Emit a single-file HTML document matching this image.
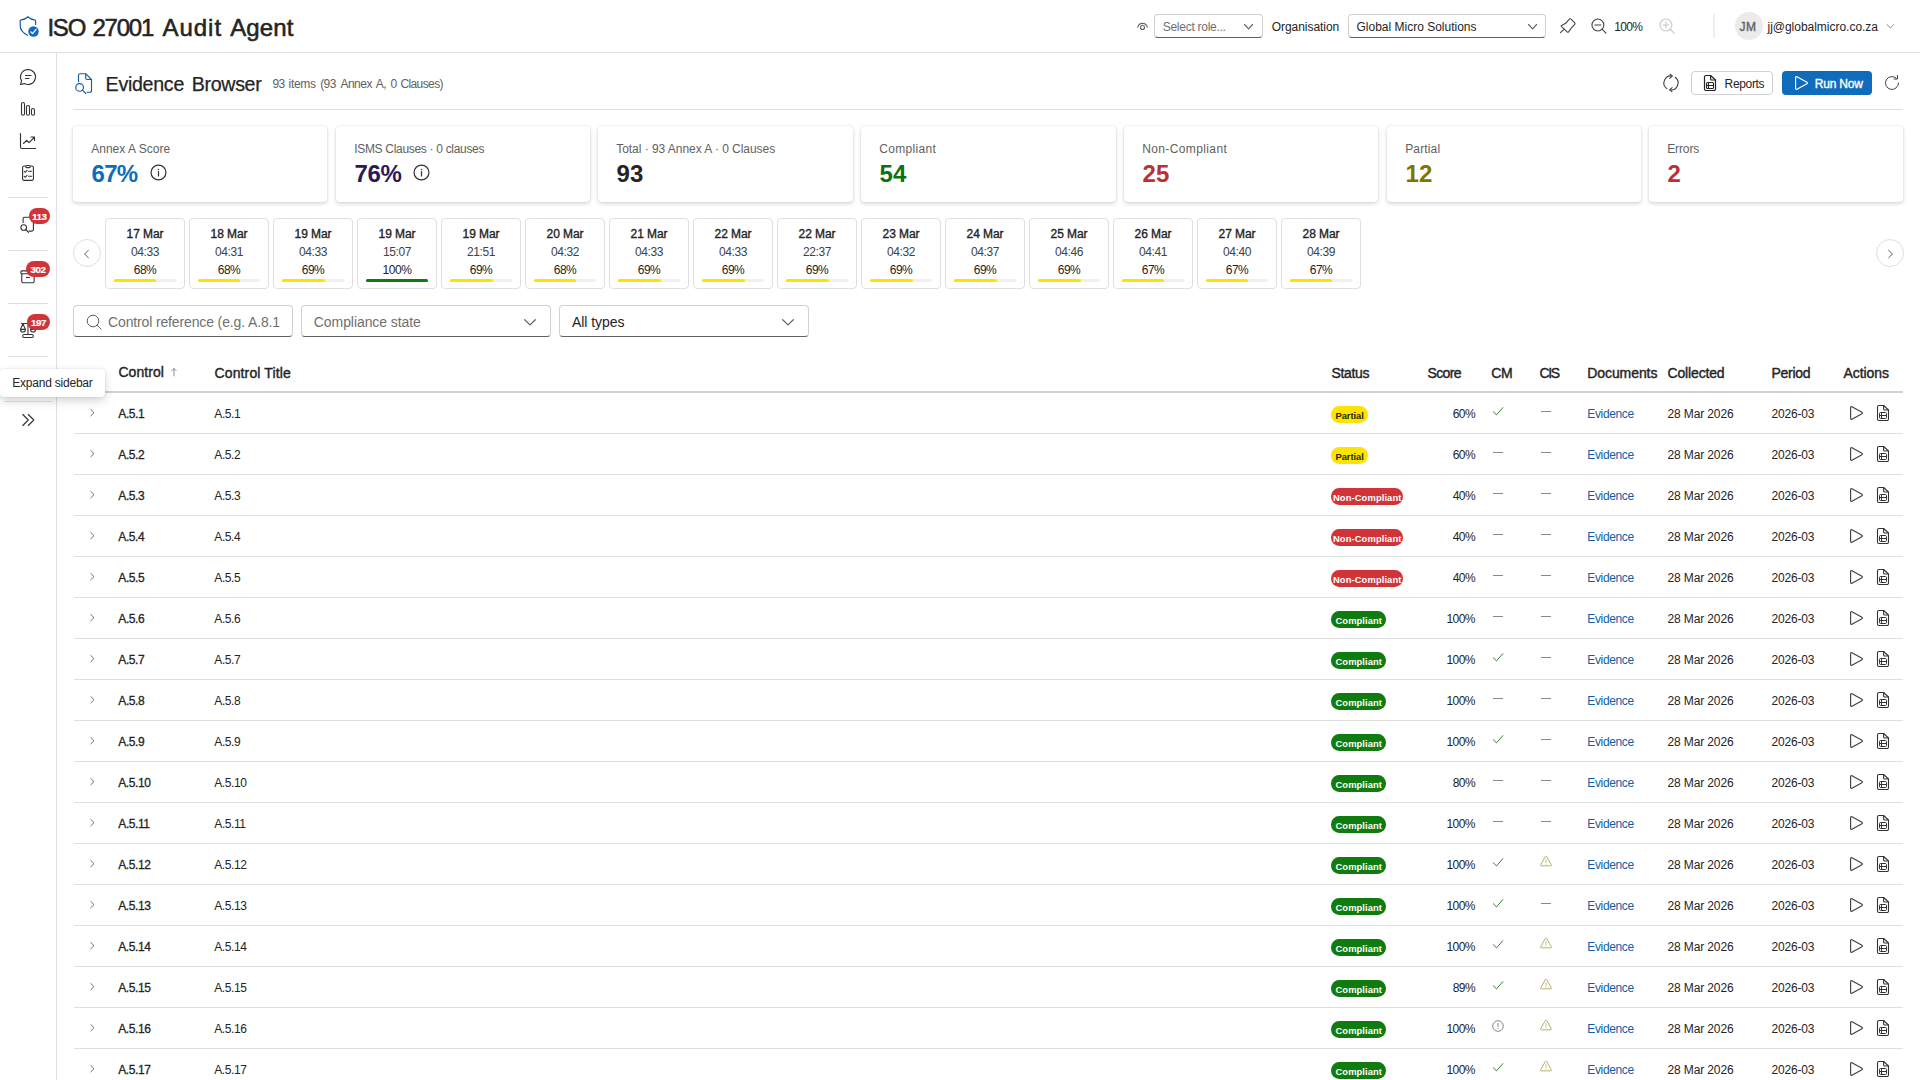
<!DOCTYPE html>
<html lang="en"><head><meta charset="utf-8"><title>ISO 27001 Audit Agent - Evidence Browser</title>
<style>
html,body{margin:0;padding:0}
body{width:1920px;height:1080px;overflow:hidden;background:#fff;position:relative;font-family:"Liberation Sans", sans-serif;color:#242424}
.t{position:absolute;white-space:pre;font-family:"Liberation Sans", sans-serif}
.i{position:absolute;overflow:visible}
#hdr{position:absolute;left:0;top:0;width:1920px;height:52px;border-bottom:1px solid #e0e0e0;box-sizing:content-box;background:#fff}
#side{position:absolute;left:0;top:53px;width:56px;height:1027px;border-right:1px solid #e0e0e0;background:#fff}
.sel{position:absolute;box-sizing:border-box;border:1px solid #d1d1d1;border-bottom-color:#616161;border-radius:4px;background:#fff}
.card{position:absolute;border-radius:4px;background:#fff;box-shadow:0 0 2px rgba(0,0,0,.12),0 2px 4px rgba(0,0,0,.14)}
.tc{position:absolute;top:218px;width:80px;height:71px;box-sizing:border-box;border:1px solid #e0e0e0;border-radius:4px;background:#fff}
.rb{position:absolute;width:28px;height:28px;box-sizing:border-box;border:1px solid #e0e0e0;border-radius:50%;background:#fff}
.bdg{position:absolute;height:16px;border-radius:8px;background:#d13438;color:#fff;font-size:9.8px;line-height:17.2px;text-align:center;font-weight:700;letter-spacing:-.45px;overflow:hidden;-webkit-text-stroke:.2px #fff}
.pill{position:absolute;height:16.4px;border-radius:8.2px}
#tip{position:absolute;left:0;top:369px;width:104.5px;height:27.7px;border-radius:4px;background:#fff;box-shadow:0 0 2px rgba(0,0,0,.14),0 4px 10px rgba(0,0,0,.17);z-index:5}
</style></head>
<body>
<div id="hdr"></div>
<svg class="i" style="left:18px;top:15px;" width="24" height="24" viewBox="0 0 24 24" fill="none"><path d="M9.900 2C8 3.600 5.800 4.600 3.200 4.800a1 1 0 0 0-1 1V10.500c0 4.500 2.800 7.500 7.400 9.700" stroke="#115ea3" stroke-width="1.200" stroke-linecap="round" stroke-linejoin="round"/><path d="M9.900 2c1.900 1.600 4.100 2.600 6.700 2.800a1 1 0 0 1 1 1V9.500" stroke="#115ea3" stroke-width="1.200" stroke-linecap="round" stroke-linejoin="round"/><circle cx="15.500" cy="16.500" r="5.250" fill="#0f6cbd"/><path d="M12.900 16.950l1.650 1.650 3.550-4.300" stroke="#fff" stroke-width="1.300" stroke-linecap="round" stroke-linejoin="round"/></svg>
<div class="t" style="left:47.4px;top:12px;font-size:24px;line-height:32px;font-weight:400;color:#242424;letter-spacing:-1.2px;-webkit-text-stroke:0.55px #242424;">ISO</div><div class="t" style="left:92.4px;top:12px;font-size:24px;line-height:32px;font-weight:400;color:#242424;letter-spacing:-1.2px;-webkit-text-stroke:0.55px #242424;">27001</div><div class="t" style="left:162.5px;top:12px;font-size:24px;line-height:32px;font-weight:400;color:#242424;letter-spacing:0.966px;-webkit-text-stroke:0.55px #242424;">Audit</div><div class="t" style="left:230.2px;top:12px;font-size:24px;line-height:32px;font-weight:400;color:#242424;letter-spacing:0.137px;-webkit-text-stroke:0.55px #242424;">Agent</div>
<svg class="i" style="left:1136px;top:20px;" width="13" height="13" viewBox="0 0 13 13" fill="none"><path d="M1.700 7.200C2.400 4.700 4.200 3.300 6.500 3.300s4.100 1.400 4.800 3.900" stroke="#616161" stroke-width="1.150" stroke-linecap="round"/><circle cx="6.500" cy="7.500" r="2" stroke="#616161" stroke-width="1.150"/></svg>
<div class="sel" style="left:1154px;top:14px;width:109px;height:24px"></div>
<div class="t" style="left:1162.7px;top:19px;font-size:12px;line-height:17px;font-weight:400;color:#707070;letter-spacing:-0.265px;">Select role...</div>
<svg class="i" style="left:1242px;top:21px;" width="12" height="12" viewBox="0 0 12 12" fill="none"><path d="M2.500 3.500L6.550 7.800 10.600 3.500" stroke="#616161" stroke-width="1.100" stroke-linecap="round" stroke-linejoin="round"/></svg>
<div class="t" style="left:1271.7px;top:19px;font-size:12px;line-height:17px;font-weight:400;color:#242424;letter-spacing:-0.046px;">Organisation</div>
<div class="sel" style="left:1348px;top:14px;width:198px;height:24px"></div>
<div class="t" style="left:1356.5px;top:19px;font-size:12px;line-height:17px;font-weight:400;color:#242424;letter-spacing:-0.003px;">Global Micro Solutions</div>
<svg class="i" style="left:1526px;top:21px;" width="12" height="12" viewBox="0 0 12 12" fill="none"><path d="M2.500 3.500L6.550 7.800 10.600 3.500" stroke="#616161" stroke-width="1.100" stroke-linecap="round" stroke-linejoin="round"/></svg>
<svg class="i" style="left:1559px;top:17px;" width="18" height="18" viewBox="0 0 18 18" fill="none"><path d="M10.300 2.200Q11.100 1.300 12 2.100L15.600 5.700Q16.500 6.600 15.700 7.400L12.900 10.300 9.600 14.900Q8.900 15.600 8.200 14.900L2.400 9.600Q1.700 8.900 2.600 8.400L6.700 6.300z" stroke="#424242" stroke-width="1.100" stroke-linejoin="round"/><path d="M5.300 12.200L1.400 15.700" stroke="#424242" stroke-width="1.100" stroke-linecap="round"/></svg>
<svg class="i" style="left:1590px;top:16.9px;" width="18" height="18" viewBox="0 0 18 18" fill="none"><circle cx="7.900" cy="8" r="5.950" stroke="#424242" stroke-width="1.100"/><path d="M12.100 12.200l3.900 3.900M4.900 8h6.100" stroke="#424242" stroke-width="1.100" stroke-linecap="round"/></svg>
<div class="t" style="left:1614.2px;top:19px;font-size:12px;line-height:17px;font-weight:400;color:#242424;letter-spacing:-0.676px;">100%</div>
<svg class="i" style="left:1658px;top:16.9px;" width="18" height="18" viewBox="0 0 18 18" fill="none"><circle cx="7.950" cy="8" r="5.950" stroke="#c6c6c6" stroke-width="1.100"/><path d="M12.150 12.200l3.900 3.900M4.900 8h6.100M7.950 4.900v6.200" stroke="#c6c6c6" stroke-width="1.100" stroke-linecap="round"/></svg>
<div style="position:absolute;left:1713px;top:14px;width:2px;height:24px;background:#efefef"></div>
<div style="position:absolute;left:1734.5px;top:12px;width:28px;height:28px;border-radius:50%;background:#ebebeb"></div>
<div class="t" style="left:1739.5px;top:19px;font-size:12px;line-height:17px;font-weight:400;color:#616161;letter-spacing:0.5px;-webkit-text-stroke:0.35px #616161;">JM</div>
<div class="t" style="left:1767.5px;top:19px;font-size:12px;line-height:17px;font-weight:400;color:#242424;letter-spacing:-0.02px;">jj@globalmicro.co.za</div>
<svg class="i" style="left:1885px;top:21px;" width="11" height="11" viewBox="0 0 11 11" fill="none"><path d="M2 3.700L5.300 6.900l3.300-3.200" stroke="#8a8a8a" stroke-width="1" stroke-linecap="round" stroke-linejoin="round"/></svg>
<div id="side"></div>
<svg class="i" style="left:18px;top:67px;" width="20" height="20" viewBox="0 0 20 20" fill="none"><path d="M10 2.500a7.500 7.500 0 1 1-3.600 14.080L2.600 17.500l.960-3.700A7.500 7.500 0 0 1 10 2.500z" stroke="#333" stroke-width="1.150" stroke-linejoin="round"/><path d="M7.500 8.500h5.500M7.500 11.500h3.500" stroke="#333" stroke-width="1.150" stroke-linecap="round"/></svg>
<svg class="i" style="left:18px;top:99px;" width="20" height="20" viewBox="0 0 20 20" fill="none"><rect x="3.500" y="3.500" width="3" height="12.700" rx="1.500" stroke="#333" stroke-width="1.100"/><rect x="8.500" y="6.500" width="3" height="9.700" rx="1.500" stroke="#333" stroke-width="1.100"/><rect x="13.500" y="9.500" width="3" height="6.700" rx="1.500" stroke="#333" stroke-width="1.100"/></svg>
<svg class="i" style="left:18px;top:131px;" width="20" height="20" viewBox="0 0 20 20" fill="none"><path d="M2.500 2.500v13.500a1.500 1.500 0 0 0 1.500 1.500h13.500" stroke="#333" stroke-width="1.150" stroke-linecap="round"/><path d="M5.500 12.500l3.200-3.200 2.300 2.300 5.500-5.500M13 6h3.500v3.500" stroke="#333" stroke-width="1.150" stroke-linecap="round" stroke-linejoin="round"/></svg>
<svg class="i" style="left:18px;top:163px;" width="20" height="20" viewBox="0 0 20 20" fill="none"><path d="M7.700 3.050H6.100a1.500 1.500 0 0 0-1.500 1.500V15.850a1.500 1.500 0 0 0 1.500 1.500h7.800a1.500 1.500 0 0 0 1.500-1.500V4.550a1.500 1.500 0 0 0-1.500-1.500H12.300" stroke="#333" stroke-width="1.100"/><rect x="7.700" y="2.450" width="4.600" height="2.200" rx="1.100" stroke="#333" stroke-width="1.100"/><path d="M6.200 8.400l1.100.9L9 7.300M6.200 13.400l1.100.9L9 12.300M10.600 8.300h3M10.600 13.300h3" stroke="#333" stroke-width="1.050" stroke-linecap="round" stroke-linejoin="round"/></svg>
<div style="position:absolute;left:8px;top:197px;width:40px;height:1px;background:#e0e0e0"></div>
<svg class="i" style="left:17px;top:215px;" width="20" height="20" viewBox="0 0 20 20" fill="none"><path d="M6.100 7.400V3.700a1.500 1.500 0 0 1 1.500-1.500H12.500l3.900 3.900V14.600a1.500 1.500 0 0 1-1.500 1.500H11.900" stroke="#333" stroke-width="1.100" stroke-linecap="round" stroke-linejoin="round"/><circle cx="6.700" cy="12.500" r="2.800" stroke="#333" stroke-width="1.100"/><path d="M8.700 14.500L11.500 17.300" stroke="#333" stroke-width="1.100" stroke-linecap="round"/></svg>
<div class="bdg" style="left:28.8px;top:208px;width:21px">113</div>
<div style="position:absolute;left:8px;top:250px;width:40px;height:1px;background:#e0e0e0"></div>
<svg class="i" style="left:18px;top:267px;" width="20" height="20" viewBox="0 0 20 20" fill="none"><rect x="2.850" y="3.900" width="14.200" height="2.800" rx="1" stroke="#333" stroke-width="1.100"/><path d="M3.750 6.700V14a1.800 1.800 0 0 0 1.800 1.800h8.800a1.800 1.800 0 0 0 1.800-1.800V6.700M8.400 10.500h3" stroke="#333" stroke-width="1.100" stroke-linecap="round"/></svg>
<div class="bdg" style="left:26px;top:261px;width:24px">302</div>
<div style="position:absolute;left:8px;top:303px;width:40px;height:1px;background:#e0e0e0"></div>
<svg class="i" style="left:18px;top:320px;" width="20" height="20" viewBox="0 0 20 20" fill="none"><path d="M3.500 3.500H16.500" stroke="#333" stroke-width="1.100" stroke-linecap="round"/><path d="M9.950 2.500V14.300" stroke="#555" stroke-width="1.300"/><path d="M2.600 9.300L4.950 3.800 7.300 9.300M12.700 9.300L15.050 3.800 17.400 9.300" stroke="#333" stroke-width="1.050" stroke-linejoin="round"/><path d="M2.500 9.400H7.400M2.500 9.400a2.450 2.600 0 0 0 4.900 0M12.600 9.400H17.500M12.600 9.400a2.450 2.600 0 0 0 4.900 0" stroke="#333" stroke-width="1.100" stroke-linecap="round"/><rect x="4.650" y="14.550" width="10.700" height="2.900" rx="1.450" stroke="#333" stroke-width="1.100"/></svg>
<div class="bdg" style="left:27px;top:314px;width:23px">197</div>
<div style="position:absolute;left:8px;top:356px;width:40px;height:1px;background:#e0e0e0"></div>
<div style="position:absolute;left:4px;top:401px;width:48px;height:1px;background:#e0e0e0"></div>
<svg class="i" style="left:20px;top:412px;" width="16" height="16" viewBox="0 0 16 16" fill="none"><path d="M2.800 2.500L8.300 8l-5.500 5.500M8.300 2.500L13.800 8l-5.500 5.500" stroke="#333" stroke-width="1.150" stroke-linecap="round" stroke-linejoin="round"/></svg>
<svg class="i" style="left:70px;top:68px;" width="28" height="28" viewBox="0 0 28 28" fill="none"><path d="M8.500 13.700V7.200a1.500 1.500 0 0 1 1.500-1.500H15.700L21.500 11.500V22.700a1.500 1.500 0 0 1-1.500 1.500H17" stroke="#115ea3" stroke-width="1.150" stroke-linecap="round" stroke-linejoin="round"/><path d="M15.700 5.700V10a1.500 1.500 0 0 0 1.500 1.500H21.500" stroke="#115ea3" stroke-width="1.150" stroke-linejoin="round"/><circle cx="9.600" cy="19.400" r="3.850" stroke="#115ea3" stroke-width="1.150"/><path d="M12.400 22.200L15.700 25.500" stroke="#115ea3" stroke-width="1.150" stroke-linecap="round"/></svg>
<div class="t" style="left:105.6px;top:70px;font-size:19.6px;line-height:28px;font-weight:400;color:#242424;letter-spacing:-0.272px;-webkit-text-stroke:0.25px #242424;">Evidence</div><div class="t" style="left:191.8px;top:70px;font-size:19.6px;line-height:28px;font-weight:400;color:#242424;letter-spacing:-0.322px;-webkit-text-stroke:0.25px #242424;">Browser</div>
<div class="t" style="left:272.4px;top:76px;font-size:12px;line-height:16px;font-weight:400;color:#616161;letter-spacing:-0.6px;">93</div><div class="t" style="left:288.6px;top:76px;font-size:12px;line-height:16px;font-weight:400;color:#616161;letter-spacing:-0.317px;">items</div><div class="t" style="left:320.2px;top:76px;font-size:12px;line-height:16px;font-weight:400;color:#616161;letter-spacing:-0.6px;">(93</div><div class="t" style="left:340.4px;top:76px;font-size:12px;line-height:16px;font-weight:400;color:#616161;letter-spacing:-0.506px;">Annex</div><div class="t" style="left:375.8px;top:76px;font-size:12px;line-height:16px;font-weight:400;color:#616161;letter-spacing:-0.6px;">A,</div><div class="t" style="left:390.5px;top:76px;font-size:12px;line-height:16px;font-weight:400;color:#616161;letter-spacing:0px;">0</div><div class="t" style="left:400.4px;top:76px;font-size:12px;line-height:16px;font-weight:400;color:#616161;letter-spacing:-0.6px;">Clauses)</div>
<div style="position:absolute;left:73px;top:109px;width:1830px;height:1px;background:#e0e0e0"></div>
<svg class="i" style="left:1661px;top:73px;" width="20" height="20" viewBox="0 0 20 20" fill="none"><path d="M11.200 3A7 7 0 0 0 5.900 15.600M14.200 4.300A7 7 0 0 1 8.700 16.800" stroke="#424242" stroke-width="1.100" stroke-linecap="round"/><path d="M9 1.100L11.200 3 8.800 5.300M11.100 14.700L8.700 16.800l2.200 1.800" stroke="#424242" stroke-width="1.100" stroke-linecap="round" stroke-linejoin="round"/></svg>
<div style="position:absolute;left:1691px;top:71px;width:82px;height:24px;box-sizing:border-box;border:1px solid #d1d1d1;border-radius:4px;background:#fff"></div>
<svg class="i" style="left:1700px;top:73px;" width="20" height="20" viewBox="0 0 20 20" fill="none"><path d="M10.600 2.500H6A1.500 1.500 0 0 0 4.500 4v12A1.500 1.500 0 0 0 6 17.500h8a1.500 1.500 0 0 0 1.500-1.500V7z" stroke="#242424" stroke-width="1.2" stroke-linejoin="round"/><path d="M10.600 2.500V6a1 1 0 0 0 1 1H15.500" stroke="#242424" stroke-width="1.2" stroke-linejoin="round"/><rect x="6.500" y="9.500" width="7" height="6" rx="1.100" stroke="#242424" stroke-width="1.1"/><path d="M6.500 12.500h7M8.500 9.500v6" stroke="#242424" stroke-width="1.1"/></svg>
<div class="t" style="left:1724.6px;top:76px;font-size:12px;line-height:16px;font-weight:400;color:#242424;letter-spacing:-0.347px;">Reports</div>
<div style="position:absolute;left:1782px;top:71px;width:90px;height:24px;border-radius:4px;background:#0f6cbd"></div>
<svg class="i" style="left:1791px;top:73px;" width="20" height="20" viewBox="0 0 20 20" fill="none"><path d="M4.600 4.500v11a.9.900 0 0 0 1.350.780l10-5.500a.9.900 0 0 0 0-1.560l-10-5.500A.9.900 0 0 0 4.600 4.500z" stroke="#fff" stroke-width="1.15" stroke-linejoin="round"/></svg>
<div class="t" style="left:1814.8px;top:76px;font-size:12px;line-height:16px;font-weight:400;color:#fff;letter-spacing:-0.194px;-webkit-text-stroke:0.35px #fff;">Run Now</div>
<svg class="i" style="left:1882px;top:73px;" width="20" height="20" viewBox="0 0 20 20" fill="none"><path d="M16.500 10a6.500 6.500 0 1 1-2.200-4.900" stroke="#424242" stroke-width="1" stroke-linecap="round"/><path d="M15.500 2.500v3.500H12" stroke="#424242" stroke-width="1" stroke-linecap="round" stroke-linejoin="round"/></svg>
<div class="card" style="left:73px;top:126px;width:254px;height:76px"></div>
<div class="t" style="left:91.2px;top:141px;font-size:12px;line-height:16px;font-weight:400;color:#616161;letter-spacing:0.02px;">Annex A Score</div>
<div class="t" style="left:91.5px;top:158px;font-size:24px;line-height:32px;font-weight:700;color:#0f6cbd;letter-spacing:-0.682px;">67%</div>
<svg class="i" style="left:150px;top:163.5px;" width="17" height="17" viewBox="0 0 17 17" fill="none"><circle cx="8.500" cy="8.500" r="7.450" stroke="#333" stroke-width="1.200"/><path d="M8.500 7.600v4.400" stroke="#333" stroke-width="1.200" stroke-linecap="round"/><circle cx="8.500" cy="5.400" r=".75" fill="#424242"/></svg>
<div class="card" style="left:336px;top:126px;width:254px;height:76px"></div>
<div class="t" style="left:354.2px;top:141px;font-size:12px;line-height:16px;font-weight:400;color:#616161;letter-spacing:-0.308px;">ISMS Clauses · 0 clauses</div>
<div class="t" style="left:354.5px;top:158px;font-size:24px;line-height:32px;font-weight:700;color:#2c1958;letter-spacing:-0.349px;">76%</div>
<svg class="i" style="left:413px;top:163.5px;" width="17" height="17" viewBox="0 0 17 17" fill="none"><circle cx="8.500" cy="8.500" r="7.450" stroke="#333" stroke-width="1.200"/><path d="M8.500 7.600v4.400" stroke="#333" stroke-width="1.200" stroke-linecap="round"/><circle cx="8.500" cy="5.400" r=".75" fill="#424242"/></svg>
<div class="card" style="left:598px;top:126px;width:255px;height:76px"></div>
<div class="t" style="left:616.2px;top:141px;font-size:12px;line-height:16px;font-weight:400;color:#616161;letter-spacing:-0.037px;">Total · 93 Annex A · 0 Clauses</div>
<div class="t" style="left:616.5px;top:158px;font-size:24px;line-height:32px;font-weight:700;color:#242424;letter-spacing:0.148px;">93</div>
<div class="card" style="left:861px;top:126px;width:255px;height:76px"></div>
<div class="t" style="left:879.2px;top:141px;font-size:12px;line-height:16px;font-weight:400;color:#616161;letter-spacing:0.33px;">Compliant</div>
<div class="t" style="left:879.5px;top:158px;font-size:24px;line-height:32px;font-weight:700;color:#0e700e;letter-spacing:0.148px;">54</div>
<div class="card" style="left:1124px;top:126px;width:254px;height:76px"></div>
<div class="t" style="left:1142.2px;top:141px;font-size:12px;line-height:16px;font-weight:400;color:#616161;letter-spacing:0.381px;">Non-Compliant</div>
<div class="t" style="left:1142.5px;top:158px;font-size:24px;line-height:32px;font-weight:700;color:#bc2f32;letter-spacing:0.148px;">25</div>
<div class="card" style="left:1387px;top:126px;width:254px;height:76px"></div>
<div class="t" style="left:1405.2px;top:141px;font-size:12px;line-height:16px;font-weight:400;color:#616161;letter-spacing:0.141px;">Partial</div>
<div class="t" style="left:1405.5px;top:158px;font-size:24px;line-height:32px;font-weight:700;color:#817400;letter-spacing:0.148px;">12</div>
<div class="card" style="left:1649px;top:126px;width:254px;height:76px"></div>
<div class="t" style="left:1667.2px;top:141px;font-size:12px;line-height:16px;font-weight:400;color:#616161;letter-spacing:-0.112px;">Errors</div>
<div class="t" style="left:1667.5px;top:158px;font-size:24px;line-height:32px;font-weight:700;color:#bc2f32;letter-spacing:-0.359px;">2</div>
<div class="tc" style="left:105px"></div>
<div class="t" style="left:126.6px;top:226px;font-size:12px;line-height:16px;font-weight:400;color:#242424;letter-spacing:-0.093px;-webkit-text-stroke:0.35px #242424;">17 Mar</div>
<div class="t" style="left:130.89px;top:244px;font-size:12px;line-height:16px;font-weight:400;color:#424242;letter-spacing:-0.36px;">04:33</div>
<div class="t" style="left:133.71px;top:262px;font-size:12px;line-height:16px;font-weight:400;color:#242424;letter-spacing:-0.481px;">68%</div>
<div style="position:absolute;left:114px;top:279px;width:62px;height:3px;border-radius:2px;background:#f0f0f0"><div style="width:68%;height:3px;border-radius:2px;background:#fde300"></div></div>
<div class="tc" style="left:189px"></div>
<div class="t" style="left:210.6px;top:226px;font-size:12px;line-height:16px;font-weight:400;color:#242424;letter-spacing:-0.093px;-webkit-text-stroke:0.35px #242424;">18 Mar</div>
<div class="t" style="left:214.89px;top:244px;font-size:12px;line-height:16px;font-weight:400;color:#424242;letter-spacing:-0.36px;">04:31</div>
<div class="t" style="left:217.71px;top:262px;font-size:12px;line-height:16px;font-weight:400;color:#242424;letter-spacing:-0.481px;">68%</div>
<div style="position:absolute;left:198px;top:279px;width:62px;height:3px;border-radius:2px;background:#f0f0f0"><div style="width:68%;height:3px;border-radius:2px;background:#fde300"></div></div>
<div class="tc" style="left:273px"></div>
<div class="t" style="left:294.6px;top:226px;font-size:12px;line-height:16px;font-weight:400;color:#242424;letter-spacing:-0.093px;-webkit-text-stroke:0.35px #242424;">19 Mar</div>
<div class="t" style="left:298.89px;top:244px;font-size:12px;line-height:16px;font-weight:400;color:#424242;letter-spacing:-0.36px;">04:33</div>
<div class="t" style="left:301.71px;top:262px;font-size:12px;line-height:16px;font-weight:400;color:#242424;letter-spacing:-0.481px;">69%</div>
<div style="position:absolute;left:282px;top:279px;width:62px;height:3px;border-radius:2px;background:#f0f0f0"><div style="width:69%;height:3px;border-radius:2px;background:#fde300"></div></div>
<div class="tc" style="left:357px"></div>
<div class="t" style="left:378.6px;top:226px;font-size:12px;line-height:16px;font-weight:400;color:#242424;letter-spacing:-0.093px;-webkit-text-stroke:0.35px #242424;">19 Mar</div>
<div class="t" style="left:382.89px;top:244px;font-size:12px;line-height:16px;font-weight:400;color:#424242;letter-spacing:-0.36px;">15:07</div>
<div class="t" style="left:382.57px;top:262px;font-size:12px;line-height:16px;font-weight:400;color:#242424;letter-spacing:-0.461px;">100%</div>
<div style="position:absolute;left:366px;top:279px;width:62px;height:3px;border-radius:2px;background:#f0f0f0"><div style="width:100%;height:3px;border-radius:2px;background:#107c10"></div></div>
<div class="tc" style="left:441px"></div>
<div class="t" style="left:462.6px;top:226px;font-size:12px;line-height:16px;font-weight:400;color:#242424;letter-spacing:-0.093px;-webkit-text-stroke:0.35px #242424;">19 Mar</div>
<div class="t" style="left:466.89px;top:244px;font-size:12px;line-height:16px;font-weight:400;color:#424242;letter-spacing:-0.36px;">21:51</div>
<div class="t" style="left:469.71px;top:262px;font-size:12px;line-height:16px;font-weight:400;color:#242424;letter-spacing:-0.481px;">69%</div>
<div style="position:absolute;left:450px;top:279px;width:62px;height:3px;border-radius:2px;background:#f0f0f0"><div style="width:69%;height:3px;border-radius:2px;background:#fde300"></div></div>
<div class="tc" style="left:525px"></div>
<div class="t" style="left:546.6px;top:226px;font-size:12px;line-height:16px;font-weight:400;color:#242424;letter-spacing:-0.093px;-webkit-text-stroke:0.35px #242424;">20 Mar</div>
<div class="t" style="left:550.89px;top:244px;font-size:12px;line-height:16px;font-weight:400;color:#424242;letter-spacing:-0.36px;">04:32</div>
<div class="t" style="left:553.71px;top:262px;font-size:12px;line-height:16px;font-weight:400;color:#242424;letter-spacing:-0.481px;">68%</div>
<div style="position:absolute;left:534px;top:279px;width:62px;height:3px;border-radius:2px;background:#f0f0f0"><div style="width:68%;height:3px;border-radius:2px;background:#fde300"></div></div>
<div class="tc" style="left:609px"></div>
<div class="t" style="left:630.6px;top:226px;font-size:12px;line-height:16px;font-weight:400;color:#242424;letter-spacing:-0.093px;-webkit-text-stroke:0.35px #242424;">21 Mar</div>
<div class="t" style="left:634.89px;top:244px;font-size:12px;line-height:16px;font-weight:400;color:#424242;letter-spacing:-0.36px;">04:33</div>
<div class="t" style="left:637.71px;top:262px;font-size:12px;line-height:16px;font-weight:400;color:#242424;letter-spacing:-0.481px;">69%</div>
<div style="position:absolute;left:618px;top:279px;width:62px;height:3px;border-radius:2px;background:#f0f0f0"><div style="width:69%;height:3px;border-radius:2px;background:#fde300"></div></div>
<div class="tc" style="left:693px"></div>
<div class="t" style="left:714.6px;top:226px;font-size:12px;line-height:16px;font-weight:400;color:#242424;letter-spacing:-0.093px;-webkit-text-stroke:0.35px #242424;">22 Mar</div>
<div class="t" style="left:718.89px;top:244px;font-size:12px;line-height:16px;font-weight:400;color:#424242;letter-spacing:-0.36px;">04:33</div>
<div class="t" style="left:721.71px;top:262px;font-size:12px;line-height:16px;font-weight:400;color:#242424;letter-spacing:-0.481px;">69%</div>
<div style="position:absolute;left:702px;top:279px;width:62px;height:3px;border-radius:2px;background:#f0f0f0"><div style="width:69%;height:3px;border-radius:2px;background:#fde300"></div></div>
<div class="tc" style="left:777px"></div>
<div class="t" style="left:798.6px;top:226px;font-size:12px;line-height:16px;font-weight:400;color:#242424;letter-spacing:-0.093px;-webkit-text-stroke:0.35px #242424;">22 Mar</div>
<div class="t" style="left:802.89px;top:244px;font-size:12px;line-height:16px;font-weight:400;color:#424242;letter-spacing:-0.36px;">22:37</div>
<div class="t" style="left:805.71px;top:262px;font-size:12px;line-height:16px;font-weight:400;color:#242424;letter-spacing:-0.481px;">69%</div>
<div style="position:absolute;left:786px;top:279px;width:62px;height:3px;border-radius:2px;background:#f0f0f0"><div style="width:69%;height:3px;border-radius:2px;background:#fde300"></div></div>
<div class="tc" style="left:861px"></div>
<div class="t" style="left:882.6px;top:226px;font-size:12px;line-height:16px;font-weight:400;color:#242424;letter-spacing:-0.093px;-webkit-text-stroke:0.35px #242424;">23 Mar</div>
<div class="t" style="left:886.89px;top:244px;font-size:12px;line-height:16px;font-weight:400;color:#424242;letter-spacing:-0.36px;">04:32</div>
<div class="t" style="left:889.71px;top:262px;font-size:12px;line-height:16px;font-weight:400;color:#242424;letter-spacing:-0.481px;">69%</div>
<div style="position:absolute;left:870px;top:279px;width:62px;height:3px;border-radius:2px;background:#f0f0f0"><div style="width:69%;height:3px;border-radius:2px;background:#fde300"></div></div>
<div class="tc" style="left:945px"></div>
<div class="t" style="left:966.6px;top:226px;font-size:12px;line-height:16px;font-weight:400;color:#242424;letter-spacing:-0.093px;-webkit-text-stroke:0.35px #242424;">24 Mar</div>
<div class="t" style="left:970.89px;top:244px;font-size:12px;line-height:16px;font-weight:400;color:#424242;letter-spacing:-0.36px;">04:37</div>
<div class="t" style="left:973.71px;top:262px;font-size:12px;line-height:16px;font-weight:400;color:#242424;letter-spacing:-0.481px;">69%</div>
<div style="position:absolute;left:954px;top:279px;width:62px;height:3px;border-radius:2px;background:#f0f0f0"><div style="width:69%;height:3px;border-radius:2px;background:#fde300"></div></div>
<div class="tc" style="left:1029px"></div>
<div class="t" style="left:1050.6px;top:226px;font-size:12px;line-height:16px;font-weight:400;color:#242424;letter-spacing:-0.093px;-webkit-text-stroke:0.35px #242424;">25 Mar</div>
<div class="t" style="left:1054.89px;top:244px;font-size:12px;line-height:16px;font-weight:400;color:#424242;letter-spacing:-0.36px;">04:46</div>
<div class="t" style="left:1057.71px;top:262px;font-size:12px;line-height:16px;font-weight:400;color:#242424;letter-spacing:-0.481px;">69%</div>
<div style="position:absolute;left:1038px;top:279px;width:62px;height:3px;border-radius:2px;background:#f0f0f0"><div style="width:69%;height:3px;border-radius:2px;background:#fde300"></div></div>
<div class="tc" style="left:1113px"></div>
<div class="t" style="left:1134.6px;top:226px;font-size:12px;line-height:16px;font-weight:400;color:#242424;letter-spacing:-0.093px;-webkit-text-stroke:0.35px #242424;">26 Mar</div>
<div class="t" style="left:1138.89px;top:244px;font-size:12px;line-height:16px;font-weight:400;color:#424242;letter-spacing:-0.36px;">04:41</div>
<div class="t" style="left:1141.71px;top:262px;font-size:12px;line-height:16px;font-weight:400;color:#242424;letter-spacing:-0.481px;">67%</div>
<div style="position:absolute;left:1122px;top:279px;width:62px;height:3px;border-radius:2px;background:#f0f0f0"><div style="width:67%;height:3px;border-radius:2px;background:#fde300"></div></div>
<div class="tc" style="left:1197px"></div>
<div class="t" style="left:1218.6px;top:226px;font-size:12px;line-height:16px;font-weight:400;color:#242424;letter-spacing:-0.093px;-webkit-text-stroke:0.35px #242424;">27 Mar</div>
<div class="t" style="left:1222.89px;top:244px;font-size:12px;line-height:16px;font-weight:400;color:#424242;letter-spacing:-0.36px;">04:40</div>
<div class="t" style="left:1225.71px;top:262px;font-size:12px;line-height:16px;font-weight:400;color:#242424;letter-spacing:-0.481px;">67%</div>
<div style="position:absolute;left:1206px;top:279px;width:62px;height:3px;border-radius:2px;background:#f0f0f0"><div style="width:67%;height:3px;border-radius:2px;background:#fde300"></div></div>
<div class="tc" style="left:1281px"></div>
<div class="t" style="left:1302.6px;top:226px;font-size:12px;line-height:16px;font-weight:400;color:#242424;letter-spacing:-0.093px;-webkit-text-stroke:0.35px #242424;">28 Mar</div>
<div class="t" style="left:1306.89px;top:244px;font-size:12px;line-height:16px;font-weight:400;color:#424242;letter-spacing:-0.36px;">04:39</div>
<div class="t" style="left:1309.71px;top:262px;font-size:12px;line-height:16px;font-weight:400;color:#242424;letter-spacing:-0.481px;">67%</div>
<div style="position:absolute;left:1290px;top:279px;width:62px;height:3px;border-radius:2px;background:#f0f0f0"><div style="width:67%;height:3px;border-radius:2px;background:#fde300"></div></div>
<div class="rb" style="left:73px;top:239px"></div>
<svg class="i" style="left:81px;top:247.5px;" width="12" height="12" viewBox="0 0 12 12" fill="none"><path d="M7.400 2.200L3.600 6l3.800 3.800" stroke="#616161" stroke-width="1" stroke-linecap="round" stroke-linejoin="round"/></svg>
<div class="rb" style="left:1876px;top:239px"></div>
<svg class="i" style="left:1884px;top:247.5px;" width="12" height="12" viewBox="0 0 12 12" fill="none"><path d="M4.600 2.200L8.400 6l-3.800 3.800" stroke="#616161" stroke-width="1" stroke-linecap="round" stroke-linejoin="round"/></svg>
<div class="sel" style="left:73px;top:305px;width:220px;height:32px"></div>
<svg class="i" style="left:85px;top:313px;" width="18" height="18" viewBox="0 0 18 18" fill="none"><circle cx="8" cy="8" r="5.800" stroke="#616161" stroke-width="1"/><path d="M12.200 12.200l4 4" stroke="#616161" stroke-width="1" stroke-linecap="round"/></svg>
<div style="position:absolute;left:108px;top:306px;width:171.5px;height:30px;overflow:hidden"><div class="t" style="left:0px;top:6px;font-size:14px;line-height:20px;font-weight:400;color:#707070;letter-spacing:-0.135px;">Control reference (e.g. A.8.1)</div></div>
<div class="sel" style="left:301px;top:305px;width:250px;height:32px"></div>
<div class="t" style="left:313.8px;top:312px;font-size:14px;line-height:20px;font-weight:400;color:#707070;letter-spacing:-0.073px;">Compliance state</div>
<svg class="i" style="left:522px;top:314px;" width="16" height="16" viewBox="0 0 16 16" fill="none"><path d="M2.700 5.700L8 10.900l5.300-5.200" stroke="#616161" stroke-width="1.200" stroke-linecap="round" stroke-linejoin="round"/></svg>
<div class="sel" style="left:559px;top:305px;width:250px;height:32px"></div>
<div class="t" style="left:572px;top:312px;font-size:14px;line-height:20px;font-weight:400;color:#242424;letter-spacing:-0.047px;">All types</div>
<svg class="i" style="left:780px;top:314px;" width="16" height="16" viewBox="0 0 16 16" fill="none"><path d="M2.700 5.700L8 10.900l5.300-5.200" stroke="#616161" stroke-width="1.200" stroke-linecap="round" stroke-linejoin="round"/></svg>
<div class="t" style="left:118.4px;top:362px;font-size:14px;line-height:20px;font-weight:400;color:#242424;letter-spacing:0.051px;-webkit-text-stroke:0.4px #242424;">Control</div>
<svg class="i" style="left:168px;top:366px;" width="12" height="12" viewBox="0 0 12 12" fill="none"><path d="M6 9.900V2.700M3.800 4.700L6 2.500l2.200 2.200" stroke="#8a8a8a" stroke-width=".950" stroke-linecap="round" stroke-linejoin="round"/></svg>
<div class="t" style="left:214.5px;top:363px;font-size:14px;line-height:20px;font-weight:400;color:#242424;letter-spacing:0.138px;-webkit-text-stroke:0.4px #242424;">Control Title</div>
<div class="t" style="left:1331.6px;top:363px;font-size:14px;line-height:20px;font-weight:400;color:#242424;letter-spacing:-0.367px;-webkit-text-stroke:0.4px #242424;">Status</div>
<div class="t" style="left:1427.5px;top:363px;font-size:14px;line-height:20px;font-weight:400;color:#242424;letter-spacing:-0.616px;-webkit-text-stroke:0.4px #242424;">Score</div>
<div class="t" style="left:1491.3px;top:363px;font-size:14px;line-height:20px;font-weight:400;color:#242424;letter-spacing:-0.391px;-webkit-text-stroke:0.4px #242424;">CM</div>
<div class="t" style="left:1539.4px;top:363px;font-size:14px;line-height:20px;font-weight:400;color:#242424;letter-spacing:-1.281px;-webkit-text-stroke:0.4px #242424;">CIS</div>
<div class="t" style="left:1587.3px;top:363px;font-size:14px;line-height:20px;font-weight:400;color:#242424;letter-spacing:-0.09px;-webkit-text-stroke:0.4px #242424;">Documents</div>
<div class="t" style="left:1667.5px;top:363px;font-size:14px;line-height:20px;font-weight:400;color:#242424;letter-spacing:-0.153px;-webkit-text-stroke:0.4px #242424;">Collected</div>
<div class="t" style="left:1771.4px;top:363px;font-size:14px;line-height:20px;font-weight:400;color:#242424;letter-spacing:-0.245px;-webkit-text-stroke:0.4px #242424;">Period</div>
<div class="t" style="left:1843.4px;top:363px;font-size:14px;line-height:20px;font-weight:400;color:#242424;letter-spacing:-0.046px;-webkit-text-stroke:0.4px #242424;">Actions</div>
<div style="position:absolute;left:73px;top:391px;width:1830px;height:2px;background:#d1d1d1"></div>
<div style="position:absolute;left:74px;top:433px;width:1829px;height:1px;background:#e0e0e0"></div>
<svg class="i" style="left:88px;top:407px;" width="10" height="12" viewBox="0 0 10 12" fill="none"><path d="M2.800 2.500L6 5.650 2.800 8.800" stroke="#707070" stroke-width="1" stroke-linecap="round" stroke-linejoin="round"/></svg>
<div class="t" style="left:118.3px;top:406px;font-size:12px;line-height:16px;font-weight:400;color:#242424;letter-spacing:-0.42px;-webkit-text-stroke:0.3px #242424;">A.5.1</div>
<div class="t" style="left:214.3px;top:406px;font-size:12px;line-height:16px;font-weight:400;color:#242424;letter-spacing:-0.42px;">A.5.1</div>
<div class="pill" style="left:1331px;top:406.2px;width:37px;background:#fde300"></div>
<div class="t" style="left:1335.5px;top:408.5px;font-size:9.4px;line-height:14px;font-weight:700;color:#2b2700;letter-spacing:-0.053px;">Partial</div>
<div class="t" style="right:445px;top:406px;font-size:12px;line-height:16px;font-weight:400;color:#242424;letter-spacing:-0.561px;">60%</div>
<svg class="i" style="left:1492px;top:404.5px;" width="12" height="12" viewBox="0 0 12 12" fill="none"><path d="M1.300 6.700l3.200 3.200L10.800 2.700" stroke="#2a7a2a" stroke-width=".950" stroke-linecap="round" stroke-linejoin="round"/></svg>
<div style="position:absolute;left:1541px;top:411px;width:10px;height:1px;background:#8a8a8a"></div>
<div class="t" style="left:1587.3px;top:406px;font-size:12px;line-height:16px;font-weight:400;color:#115ea3;letter-spacing:-0.359px;">Evidence</div>
<div class="t" style="left:1667.5px;top:406px;font-size:12px;line-height:16px;font-weight:400;color:#242424;letter-spacing:-0.126px;">28 Mar 2026</div>
<div class="t" style="left:1771.4px;top:406px;font-size:12px;line-height:16px;font-weight:400;color:#242424;letter-spacing:-0.15px;">2026-03</div>
<svg class="i" style="left:1845.6px;top:403px;" width="20" height="20" viewBox="0 0 20 20" fill="none"><path d="M4.600 4.500v11a.9.900 0 0 0 1.350.780l10-5.500a.9.900 0 0 0 0-1.560l-10-5.500A.9.900 0 0 0 4.600 4.500z" stroke="#424242" stroke-width="1.15" stroke-linejoin="round"/></svg>
<svg class="i" style="left:1873px;top:403px;" width="20" height="20" viewBox="0 0 20 20" fill="none"><path d="M10.600 2.500H6A1.500 1.500 0 0 0 4.500 4v12A1.500 1.500 0 0 0 6 17.500h8a1.500 1.500 0 0 0 1.500-1.500V7z" stroke="#333" stroke-width="1.1" stroke-linejoin="round"/><path d="M10.600 2.500V6a1 1 0 0 0 1 1H15.500" stroke="#333" stroke-width="1.1" stroke-linejoin="round"/><rect x="6.500" y="9.500" width="7" height="6" rx="1.100" stroke="#333" stroke-width="1.0"/><path d="M6.500 12.500h7M8.500 9.500v6" stroke="#333" stroke-width="1.0"/></svg>
<div style="position:absolute;left:74px;top:474px;width:1829px;height:1px;background:#e0e0e0"></div>
<svg class="i" style="left:88px;top:448px;" width="10" height="12" viewBox="0 0 10 12" fill="none"><path d="M2.800 2.500L6 5.650 2.800 8.800" stroke="#707070" stroke-width="1" stroke-linecap="round" stroke-linejoin="round"/></svg>
<div class="t" style="left:118.3px;top:447px;font-size:12px;line-height:16px;font-weight:400;color:#242424;letter-spacing:-0.42px;-webkit-text-stroke:0.3px #242424;">A.5.2</div>
<div class="t" style="left:214.3px;top:447px;font-size:12px;line-height:16px;font-weight:400;color:#242424;letter-spacing:-0.42px;">A.5.2</div>
<div class="pill" style="left:1331px;top:447.2px;width:37px;background:#fde300"></div>
<div class="t" style="left:1335.5px;top:449.5px;font-size:9.4px;line-height:14px;font-weight:700;color:#2b2700;letter-spacing:-0.053px;">Partial</div>
<div class="t" style="right:445px;top:447px;font-size:12px;line-height:16px;font-weight:400;color:#242424;letter-spacing:-0.561px;">60%</div>
<div style="position:absolute;left:1493px;top:452px;width:10px;height:1px;background:#8a8a8a"></div>
<div style="position:absolute;left:1541px;top:452px;width:10px;height:1px;background:#8a8a8a"></div>
<div class="t" style="left:1587.3px;top:447px;font-size:12px;line-height:16px;font-weight:400;color:#115ea3;letter-spacing:-0.359px;">Evidence</div>
<div class="t" style="left:1667.5px;top:447px;font-size:12px;line-height:16px;font-weight:400;color:#242424;letter-spacing:-0.126px;">28 Mar 2026</div>
<div class="t" style="left:1771.4px;top:447px;font-size:12px;line-height:16px;font-weight:400;color:#242424;letter-spacing:-0.15px;">2026-03</div>
<svg class="i" style="left:1845.6px;top:444px;" width="20" height="20" viewBox="0 0 20 20" fill="none"><path d="M4.600 4.500v11a.9.900 0 0 0 1.350.780l10-5.500a.9.900 0 0 0 0-1.560l-10-5.500A.9.900 0 0 0 4.600 4.500z" stroke="#424242" stroke-width="1.15" stroke-linejoin="round"/></svg>
<svg class="i" style="left:1873px;top:444px;" width="20" height="20" viewBox="0 0 20 20" fill="none"><path d="M10.600 2.500H6A1.500 1.500 0 0 0 4.500 4v12A1.500 1.500 0 0 0 6 17.500h8a1.500 1.500 0 0 0 1.500-1.500V7z" stroke="#333" stroke-width="1.1" stroke-linejoin="round"/><path d="M10.600 2.500V6a1 1 0 0 0 1 1H15.500" stroke="#333" stroke-width="1.1" stroke-linejoin="round"/><rect x="6.500" y="9.500" width="7" height="6" rx="1.100" stroke="#333" stroke-width="1.0"/><path d="M6.500 12.500h7M8.500 9.500v6" stroke="#333" stroke-width="1.0"/></svg>
<div style="position:absolute;left:74px;top:515px;width:1829px;height:1px;background:#e0e0e0"></div>
<svg class="i" style="left:88px;top:489px;" width="10" height="12" viewBox="0 0 10 12" fill="none"><path d="M2.800 2.500L6 5.650 2.800 8.800" stroke="#707070" stroke-width="1" stroke-linecap="round" stroke-linejoin="round"/></svg>
<div class="t" style="left:118.3px;top:488px;font-size:12px;line-height:16px;font-weight:400;color:#242424;letter-spacing:-0.42px;-webkit-text-stroke:0.3px #242424;">A.5.3</div>
<div class="t" style="left:214.3px;top:488px;font-size:12px;line-height:16px;font-weight:400;color:#242424;letter-spacing:-0.42px;">A.5.3</div>
<div class="pill" style="left:1331px;top:488.2px;width:72px;background:#d13438"></div>
<div class="t" style="left:1333px;top:490.5px;font-size:9.4px;line-height:14px;font-weight:700;color:#fff;letter-spacing:0.101px;">Non-Compliant</div>
<div class="t" style="right:445px;top:488px;font-size:12px;line-height:16px;font-weight:400;color:#242424;letter-spacing:-0.561px;">40%</div>
<div style="position:absolute;left:1493px;top:493px;width:10px;height:1px;background:#8a8a8a"></div>
<div style="position:absolute;left:1541px;top:493px;width:10px;height:1px;background:#8a8a8a"></div>
<div class="t" style="left:1587.3px;top:488px;font-size:12px;line-height:16px;font-weight:400;color:#115ea3;letter-spacing:-0.359px;">Evidence</div>
<div class="t" style="left:1667.5px;top:488px;font-size:12px;line-height:16px;font-weight:400;color:#242424;letter-spacing:-0.126px;">28 Mar 2026</div>
<div class="t" style="left:1771.4px;top:488px;font-size:12px;line-height:16px;font-weight:400;color:#242424;letter-spacing:-0.15px;">2026-03</div>
<svg class="i" style="left:1845.6px;top:485px;" width="20" height="20" viewBox="0 0 20 20" fill="none"><path d="M4.600 4.500v11a.9.900 0 0 0 1.350.780l10-5.500a.9.900 0 0 0 0-1.560l-10-5.500A.9.900 0 0 0 4.600 4.500z" stroke="#424242" stroke-width="1.15" stroke-linejoin="round"/></svg>
<svg class="i" style="left:1873px;top:485px;" width="20" height="20" viewBox="0 0 20 20" fill="none"><path d="M10.600 2.500H6A1.500 1.500 0 0 0 4.500 4v12A1.500 1.500 0 0 0 6 17.500h8a1.500 1.500 0 0 0 1.500-1.500V7z" stroke="#333" stroke-width="1.1" stroke-linejoin="round"/><path d="M10.600 2.500V6a1 1 0 0 0 1 1H15.500" stroke="#333" stroke-width="1.1" stroke-linejoin="round"/><rect x="6.500" y="9.500" width="7" height="6" rx="1.100" stroke="#333" stroke-width="1.0"/><path d="M6.500 12.500h7M8.500 9.500v6" stroke="#333" stroke-width="1.0"/></svg>
<div style="position:absolute;left:74px;top:556px;width:1829px;height:1px;background:#e0e0e0"></div>
<svg class="i" style="left:88px;top:530px;" width="10" height="12" viewBox="0 0 10 12" fill="none"><path d="M2.800 2.500L6 5.650 2.800 8.800" stroke="#707070" stroke-width="1" stroke-linecap="round" stroke-linejoin="round"/></svg>
<div class="t" style="left:118.3px;top:529px;font-size:12px;line-height:16px;font-weight:400;color:#242424;letter-spacing:-0.42px;-webkit-text-stroke:0.3px #242424;">A.5.4</div>
<div class="t" style="left:214.3px;top:529px;font-size:12px;line-height:16px;font-weight:400;color:#242424;letter-spacing:-0.42px;">A.5.4</div>
<div class="pill" style="left:1331px;top:529.2px;width:72px;background:#d13438"></div>
<div class="t" style="left:1333px;top:531.5px;font-size:9.4px;line-height:14px;font-weight:700;color:#fff;letter-spacing:0.101px;">Non-Compliant</div>
<div class="t" style="right:445px;top:529px;font-size:12px;line-height:16px;font-weight:400;color:#242424;letter-spacing:-0.561px;">40%</div>
<div style="position:absolute;left:1493px;top:534px;width:10px;height:1px;background:#8a8a8a"></div>
<div style="position:absolute;left:1541px;top:534px;width:10px;height:1px;background:#8a8a8a"></div>
<div class="t" style="left:1587.3px;top:529px;font-size:12px;line-height:16px;font-weight:400;color:#115ea3;letter-spacing:-0.359px;">Evidence</div>
<div class="t" style="left:1667.5px;top:529px;font-size:12px;line-height:16px;font-weight:400;color:#242424;letter-spacing:-0.126px;">28 Mar 2026</div>
<div class="t" style="left:1771.4px;top:529px;font-size:12px;line-height:16px;font-weight:400;color:#242424;letter-spacing:-0.15px;">2026-03</div>
<svg class="i" style="left:1845.6px;top:526px;" width="20" height="20" viewBox="0 0 20 20" fill="none"><path d="M4.600 4.500v11a.9.900 0 0 0 1.350.780l10-5.500a.9.900 0 0 0 0-1.560l-10-5.500A.9.900 0 0 0 4.600 4.500z" stroke="#424242" stroke-width="1.15" stroke-linejoin="round"/></svg>
<svg class="i" style="left:1873px;top:526px;" width="20" height="20" viewBox="0 0 20 20" fill="none"><path d="M10.600 2.500H6A1.500 1.500 0 0 0 4.500 4v12A1.500 1.500 0 0 0 6 17.500h8a1.500 1.500 0 0 0 1.500-1.500V7z" stroke="#333" stroke-width="1.1" stroke-linejoin="round"/><path d="M10.600 2.500V6a1 1 0 0 0 1 1H15.500" stroke="#333" stroke-width="1.1" stroke-linejoin="round"/><rect x="6.500" y="9.500" width="7" height="6" rx="1.100" stroke="#333" stroke-width="1.0"/><path d="M6.500 12.500h7M8.500 9.500v6" stroke="#333" stroke-width="1.0"/></svg>
<div style="position:absolute;left:74px;top:597px;width:1829px;height:1px;background:#e0e0e0"></div>
<svg class="i" style="left:88px;top:571px;" width="10" height="12" viewBox="0 0 10 12" fill="none"><path d="M2.800 2.500L6 5.650 2.800 8.800" stroke="#707070" stroke-width="1" stroke-linecap="round" stroke-linejoin="round"/></svg>
<div class="t" style="left:118.3px;top:570px;font-size:12px;line-height:16px;font-weight:400;color:#242424;letter-spacing:-0.42px;-webkit-text-stroke:0.3px #242424;">A.5.5</div>
<div class="t" style="left:214.3px;top:570px;font-size:12px;line-height:16px;font-weight:400;color:#242424;letter-spacing:-0.42px;">A.5.5</div>
<div class="pill" style="left:1331px;top:570.2px;width:72px;background:#d13438"></div>
<div class="t" style="left:1333px;top:572.5px;font-size:9.4px;line-height:14px;font-weight:700;color:#fff;letter-spacing:0.101px;">Non-Compliant</div>
<div class="t" style="right:445px;top:570px;font-size:12px;line-height:16px;font-weight:400;color:#242424;letter-spacing:-0.561px;">40%</div>
<div style="position:absolute;left:1493px;top:575px;width:10px;height:1px;background:#8a8a8a"></div>
<div style="position:absolute;left:1541px;top:575px;width:10px;height:1px;background:#8a8a8a"></div>
<div class="t" style="left:1587.3px;top:570px;font-size:12px;line-height:16px;font-weight:400;color:#115ea3;letter-spacing:-0.359px;">Evidence</div>
<div class="t" style="left:1667.5px;top:570px;font-size:12px;line-height:16px;font-weight:400;color:#242424;letter-spacing:-0.126px;">28 Mar 2026</div>
<div class="t" style="left:1771.4px;top:570px;font-size:12px;line-height:16px;font-weight:400;color:#242424;letter-spacing:-0.15px;">2026-03</div>
<svg class="i" style="left:1845.6px;top:567px;" width="20" height="20" viewBox="0 0 20 20" fill="none"><path d="M4.600 4.500v11a.9.900 0 0 0 1.350.780l10-5.500a.9.900 0 0 0 0-1.560l-10-5.500A.9.900 0 0 0 4.600 4.500z" stroke="#424242" stroke-width="1.15" stroke-linejoin="round"/></svg>
<svg class="i" style="left:1873px;top:567px;" width="20" height="20" viewBox="0 0 20 20" fill="none"><path d="M10.600 2.500H6A1.500 1.500 0 0 0 4.500 4v12A1.500 1.500 0 0 0 6 17.500h8a1.500 1.500 0 0 0 1.500-1.500V7z" stroke="#333" stroke-width="1.1" stroke-linejoin="round"/><path d="M10.600 2.500V6a1 1 0 0 0 1 1H15.500" stroke="#333" stroke-width="1.1" stroke-linejoin="round"/><rect x="6.500" y="9.500" width="7" height="6" rx="1.100" stroke="#333" stroke-width="1.0"/><path d="M6.500 12.500h7M8.500 9.500v6" stroke="#333" stroke-width="1.0"/></svg>
<div style="position:absolute;left:74px;top:638px;width:1829px;height:1px;background:#e0e0e0"></div>
<svg class="i" style="left:88px;top:612px;" width="10" height="12" viewBox="0 0 10 12" fill="none"><path d="M2.800 2.500L6 5.650 2.800 8.800" stroke="#707070" stroke-width="1" stroke-linecap="round" stroke-linejoin="round"/></svg>
<div class="t" style="left:118.3px;top:611px;font-size:12px;line-height:16px;font-weight:400;color:#242424;letter-spacing:-0.42px;-webkit-text-stroke:0.3px #242424;">A.5.6</div>
<div class="t" style="left:214.3px;top:611px;font-size:12px;line-height:16px;font-weight:400;color:#242424;letter-spacing:-0.42px;">A.5.6</div>
<div class="pill" style="left:1331px;top:611.2px;width:55px;background:#107c10"></div>
<div class="t" style="left:1335.5px;top:613.5px;font-size:9.4px;line-height:14px;font-weight:700;color:#fff;letter-spacing:0.073px;">Compliant</div>
<div class="t" style="right:445px;top:611px;font-size:12px;line-height:16px;font-weight:400;color:#242424;letter-spacing:-0.537px;">100%</div>
<div style="position:absolute;left:1493px;top:616px;width:10px;height:1px;background:#8a8a8a"></div>
<div style="position:absolute;left:1541px;top:616px;width:10px;height:1px;background:#8a8a8a"></div>
<div class="t" style="left:1587.3px;top:611px;font-size:12px;line-height:16px;font-weight:400;color:#115ea3;letter-spacing:-0.359px;">Evidence</div>
<div class="t" style="left:1667.5px;top:611px;font-size:12px;line-height:16px;font-weight:400;color:#242424;letter-spacing:-0.126px;">28 Mar 2026</div>
<div class="t" style="left:1771.4px;top:611px;font-size:12px;line-height:16px;font-weight:400;color:#242424;letter-spacing:-0.15px;">2026-03</div>
<svg class="i" style="left:1845.6px;top:608px;" width="20" height="20" viewBox="0 0 20 20" fill="none"><path d="M4.600 4.500v11a.9.900 0 0 0 1.350.780l10-5.500a.9.900 0 0 0 0-1.560l-10-5.500A.9.900 0 0 0 4.600 4.500z" stroke="#424242" stroke-width="1.15" stroke-linejoin="round"/></svg>
<svg class="i" style="left:1873px;top:608px;" width="20" height="20" viewBox="0 0 20 20" fill="none"><path d="M10.600 2.500H6A1.500 1.500 0 0 0 4.500 4v12A1.500 1.500 0 0 0 6 17.500h8a1.500 1.500 0 0 0 1.500-1.500V7z" stroke="#333" stroke-width="1.1" stroke-linejoin="round"/><path d="M10.600 2.500V6a1 1 0 0 0 1 1H15.500" stroke="#333" stroke-width="1.1" stroke-linejoin="round"/><rect x="6.500" y="9.500" width="7" height="6" rx="1.100" stroke="#333" stroke-width="1.0"/><path d="M6.500 12.500h7M8.500 9.500v6" stroke="#333" stroke-width="1.0"/></svg>
<div style="position:absolute;left:74px;top:679px;width:1829px;height:1px;background:#e0e0e0"></div>
<svg class="i" style="left:88px;top:653px;" width="10" height="12" viewBox="0 0 10 12" fill="none"><path d="M2.800 2.500L6 5.650 2.800 8.800" stroke="#707070" stroke-width="1" stroke-linecap="round" stroke-linejoin="round"/></svg>
<div class="t" style="left:118.3px;top:652px;font-size:12px;line-height:16px;font-weight:400;color:#242424;letter-spacing:-0.42px;-webkit-text-stroke:0.3px #242424;">A.5.7</div>
<div class="t" style="left:214.3px;top:652px;font-size:12px;line-height:16px;font-weight:400;color:#242424;letter-spacing:-0.42px;">A.5.7</div>
<div class="pill" style="left:1331px;top:652.2px;width:55px;background:#107c10"></div>
<div class="t" style="left:1335.5px;top:654.5px;font-size:9.4px;line-height:14px;font-weight:700;color:#fff;letter-spacing:0.073px;">Compliant</div>
<div class="t" style="right:445px;top:652px;font-size:12px;line-height:16px;font-weight:400;color:#242424;letter-spacing:-0.537px;">100%</div>
<svg class="i" style="left:1492px;top:650.5px;" width="12" height="12" viewBox="0 0 12 12" fill="none"><path d="M1.300 6.700l3.200 3.200L10.800 2.700" stroke="#2a7a2a" stroke-width=".950" stroke-linecap="round" stroke-linejoin="round"/></svg>
<div style="position:absolute;left:1541px;top:657px;width:10px;height:1px;background:#8a8a8a"></div>
<div class="t" style="left:1587.3px;top:652px;font-size:12px;line-height:16px;font-weight:400;color:#115ea3;letter-spacing:-0.359px;">Evidence</div>
<div class="t" style="left:1667.5px;top:652px;font-size:12px;line-height:16px;font-weight:400;color:#242424;letter-spacing:-0.126px;">28 Mar 2026</div>
<div class="t" style="left:1771.4px;top:652px;font-size:12px;line-height:16px;font-weight:400;color:#242424;letter-spacing:-0.15px;">2026-03</div>
<svg class="i" style="left:1845.6px;top:649px;" width="20" height="20" viewBox="0 0 20 20" fill="none"><path d="M4.600 4.500v11a.9.900 0 0 0 1.350.780l10-5.500a.9.900 0 0 0 0-1.560l-10-5.500A.9.900 0 0 0 4.600 4.500z" stroke="#424242" stroke-width="1.15" stroke-linejoin="round"/></svg>
<svg class="i" style="left:1873px;top:649px;" width="20" height="20" viewBox="0 0 20 20" fill="none"><path d="M10.600 2.500H6A1.500 1.500 0 0 0 4.500 4v12A1.500 1.500 0 0 0 6 17.500h8a1.500 1.500 0 0 0 1.500-1.500V7z" stroke="#333" stroke-width="1.1" stroke-linejoin="round"/><path d="M10.600 2.500V6a1 1 0 0 0 1 1H15.500" stroke="#333" stroke-width="1.1" stroke-linejoin="round"/><rect x="6.500" y="9.500" width="7" height="6" rx="1.100" stroke="#333" stroke-width="1.0"/><path d="M6.500 12.500h7M8.500 9.500v6" stroke="#333" stroke-width="1.0"/></svg>
<div style="position:absolute;left:74px;top:720px;width:1829px;height:1px;background:#e0e0e0"></div>
<svg class="i" style="left:88px;top:694px;" width="10" height="12" viewBox="0 0 10 12" fill="none"><path d="M2.800 2.500L6 5.650 2.800 8.800" stroke="#707070" stroke-width="1" stroke-linecap="round" stroke-linejoin="round"/></svg>
<div class="t" style="left:118.3px;top:693px;font-size:12px;line-height:16px;font-weight:400;color:#242424;letter-spacing:-0.42px;-webkit-text-stroke:0.3px #242424;">A.5.8</div>
<div class="t" style="left:214.3px;top:693px;font-size:12px;line-height:16px;font-weight:400;color:#242424;letter-spacing:-0.42px;">A.5.8</div>
<div class="pill" style="left:1331px;top:693.2px;width:55px;background:#107c10"></div>
<div class="t" style="left:1335.5px;top:695.5px;font-size:9.4px;line-height:14px;font-weight:700;color:#fff;letter-spacing:0.073px;">Compliant</div>
<div class="t" style="right:445px;top:693px;font-size:12px;line-height:16px;font-weight:400;color:#242424;letter-spacing:-0.537px;">100%</div>
<div style="position:absolute;left:1493px;top:698px;width:10px;height:1px;background:#8a8a8a"></div>
<div style="position:absolute;left:1541px;top:698px;width:10px;height:1px;background:#8a8a8a"></div>
<div class="t" style="left:1587.3px;top:693px;font-size:12px;line-height:16px;font-weight:400;color:#115ea3;letter-spacing:-0.359px;">Evidence</div>
<div class="t" style="left:1667.5px;top:693px;font-size:12px;line-height:16px;font-weight:400;color:#242424;letter-spacing:-0.126px;">28 Mar 2026</div>
<div class="t" style="left:1771.4px;top:693px;font-size:12px;line-height:16px;font-weight:400;color:#242424;letter-spacing:-0.15px;">2026-03</div>
<svg class="i" style="left:1845.6px;top:690px;" width="20" height="20" viewBox="0 0 20 20" fill="none"><path d="M4.600 4.500v11a.9.900 0 0 0 1.350.780l10-5.500a.9.900 0 0 0 0-1.560l-10-5.500A.9.900 0 0 0 4.600 4.500z" stroke="#424242" stroke-width="1.15" stroke-linejoin="round"/></svg>
<svg class="i" style="left:1873px;top:690px;" width="20" height="20" viewBox="0 0 20 20" fill="none"><path d="M10.600 2.500H6A1.500 1.500 0 0 0 4.500 4v12A1.500 1.500 0 0 0 6 17.500h8a1.500 1.500 0 0 0 1.500-1.500V7z" stroke="#333" stroke-width="1.1" stroke-linejoin="round"/><path d="M10.600 2.500V6a1 1 0 0 0 1 1H15.500" stroke="#333" stroke-width="1.1" stroke-linejoin="round"/><rect x="6.500" y="9.500" width="7" height="6" rx="1.100" stroke="#333" stroke-width="1.0"/><path d="M6.500 12.500h7M8.500 9.500v6" stroke="#333" stroke-width="1.0"/></svg>
<div style="position:absolute;left:74px;top:761px;width:1829px;height:1px;background:#e0e0e0"></div>
<svg class="i" style="left:88px;top:735px;" width="10" height="12" viewBox="0 0 10 12" fill="none"><path d="M2.800 2.500L6 5.650 2.800 8.800" stroke="#707070" stroke-width="1" stroke-linecap="round" stroke-linejoin="round"/></svg>
<div class="t" style="left:118.3px;top:734px;font-size:12px;line-height:16px;font-weight:400;color:#242424;letter-spacing:-0.42px;-webkit-text-stroke:0.3px #242424;">A.5.9</div>
<div class="t" style="left:214.3px;top:734px;font-size:12px;line-height:16px;font-weight:400;color:#242424;letter-spacing:-0.42px;">A.5.9</div>
<div class="pill" style="left:1331px;top:734.2px;width:55px;background:#107c10"></div>
<div class="t" style="left:1335.5px;top:736.5px;font-size:9.4px;line-height:14px;font-weight:700;color:#fff;letter-spacing:0.073px;">Compliant</div>
<div class="t" style="right:445px;top:734px;font-size:12px;line-height:16px;font-weight:400;color:#242424;letter-spacing:-0.537px;">100%</div>
<svg class="i" style="left:1492px;top:732.5px;" width="12" height="12" viewBox="0 0 12 12" fill="none"><path d="M1.300 6.700l3.200 3.200L10.800 2.700" stroke="#2a7a2a" stroke-width=".950" stroke-linecap="round" stroke-linejoin="round"/></svg>
<div style="position:absolute;left:1541px;top:739px;width:10px;height:1px;background:#8a8a8a"></div>
<div class="t" style="left:1587.3px;top:734px;font-size:12px;line-height:16px;font-weight:400;color:#115ea3;letter-spacing:-0.359px;">Evidence</div>
<div class="t" style="left:1667.5px;top:734px;font-size:12px;line-height:16px;font-weight:400;color:#242424;letter-spacing:-0.126px;">28 Mar 2026</div>
<div class="t" style="left:1771.4px;top:734px;font-size:12px;line-height:16px;font-weight:400;color:#242424;letter-spacing:-0.15px;">2026-03</div>
<svg class="i" style="left:1845.6px;top:731px;" width="20" height="20" viewBox="0 0 20 20" fill="none"><path d="M4.600 4.500v11a.9.900 0 0 0 1.350.780l10-5.500a.9.900 0 0 0 0-1.560l-10-5.500A.9.900 0 0 0 4.600 4.500z" stroke="#424242" stroke-width="1.15" stroke-linejoin="round"/></svg>
<svg class="i" style="left:1873px;top:731px;" width="20" height="20" viewBox="0 0 20 20" fill="none"><path d="M10.600 2.500H6A1.500 1.500 0 0 0 4.500 4v12A1.500 1.500 0 0 0 6 17.500h8a1.500 1.500 0 0 0 1.500-1.500V7z" stroke="#333" stroke-width="1.1" stroke-linejoin="round"/><path d="M10.600 2.500V6a1 1 0 0 0 1 1H15.500" stroke="#333" stroke-width="1.1" stroke-linejoin="round"/><rect x="6.500" y="9.500" width="7" height="6" rx="1.100" stroke="#333" stroke-width="1.0"/><path d="M6.500 12.500h7M8.500 9.500v6" stroke="#333" stroke-width="1.0"/></svg>
<div style="position:absolute;left:74px;top:802px;width:1829px;height:1px;background:#e0e0e0"></div>
<svg class="i" style="left:88px;top:776px;" width="10" height="12" viewBox="0 0 10 12" fill="none"><path d="M2.800 2.500L6 5.650 2.800 8.800" stroke="#707070" stroke-width="1" stroke-linecap="round" stroke-linejoin="round"/></svg>
<div class="t" style="left:118.3px;top:775px;font-size:12px;line-height:16px;font-weight:400;color:#242424;letter-spacing:-0.434px;-webkit-text-stroke:0.3px #242424;">A.5.10</div>
<div class="t" style="left:214.3px;top:775px;font-size:12px;line-height:16px;font-weight:400;color:#242424;letter-spacing:-0.434px;">A.5.10</div>
<div class="pill" style="left:1331px;top:775.2px;width:55px;background:#107c10"></div>
<div class="t" style="left:1335.5px;top:777.5px;font-size:9.4px;line-height:14px;font-weight:700;color:#fff;letter-spacing:0.073px;">Compliant</div>
<div class="t" style="right:445px;top:775px;font-size:12px;line-height:16px;font-weight:400;color:#242424;letter-spacing:-0.561px;">80%</div>
<div style="position:absolute;left:1493px;top:780px;width:10px;height:1px;background:#8a8a8a"></div>
<div style="position:absolute;left:1541px;top:780px;width:10px;height:1px;background:#8a8a8a"></div>
<div class="t" style="left:1587.3px;top:775px;font-size:12px;line-height:16px;font-weight:400;color:#115ea3;letter-spacing:-0.359px;">Evidence</div>
<div class="t" style="left:1667.5px;top:775px;font-size:12px;line-height:16px;font-weight:400;color:#242424;letter-spacing:-0.126px;">28 Mar 2026</div>
<div class="t" style="left:1771.4px;top:775px;font-size:12px;line-height:16px;font-weight:400;color:#242424;letter-spacing:-0.15px;">2026-03</div>
<svg class="i" style="left:1845.6px;top:772px;" width="20" height="20" viewBox="0 0 20 20" fill="none"><path d="M4.600 4.500v11a.9.900 0 0 0 1.350.780l10-5.500a.9.900 0 0 0 0-1.560l-10-5.500A.9.900 0 0 0 4.600 4.500z" stroke="#424242" stroke-width="1.15" stroke-linejoin="round"/></svg>
<svg class="i" style="left:1873px;top:772px;" width="20" height="20" viewBox="0 0 20 20" fill="none"><path d="M10.600 2.500H6A1.500 1.500 0 0 0 4.500 4v12A1.500 1.500 0 0 0 6 17.500h8a1.500 1.500 0 0 0 1.500-1.500V7z" stroke="#333" stroke-width="1.1" stroke-linejoin="round"/><path d="M10.600 2.500V6a1 1 0 0 0 1 1H15.500" stroke="#333" stroke-width="1.1" stroke-linejoin="round"/><rect x="6.500" y="9.500" width="7" height="6" rx="1.100" stroke="#333" stroke-width="1.0"/><path d="M6.500 12.500h7M8.500 9.500v6" stroke="#333" stroke-width="1.0"/></svg>
<div style="position:absolute;left:74px;top:843px;width:1829px;height:1px;background:#e0e0e0"></div>
<svg class="i" style="left:88px;top:817px;" width="10" height="12" viewBox="0 0 10 12" fill="none"><path d="M2.800 2.500L6 5.650 2.800 8.800" stroke="#707070" stroke-width="1" stroke-linecap="round" stroke-linejoin="round"/></svg>
<div class="t" style="left:118.3px;top:816px;font-size:12px;line-height:16px;font-weight:400;color:#242424;letter-spacing:-0.423px;-webkit-text-stroke:0.3px #242424;">A.5.11</div>
<div class="t" style="left:214.3px;top:816px;font-size:12px;line-height:16px;font-weight:400;color:#242424;letter-spacing:-0.423px;">A.5.11</div>
<div class="pill" style="left:1331px;top:816.2px;width:55px;background:#107c10"></div>
<div class="t" style="left:1335.5px;top:818.5px;font-size:9.4px;line-height:14px;font-weight:700;color:#fff;letter-spacing:0.073px;">Compliant</div>
<div class="t" style="right:445px;top:816px;font-size:12px;line-height:16px;font-weight:400;color:#242424;letter-spacing:-0.537px;">100%</div>
<div style="position:absolute;left:1493px;top:821px;width:10px;height:1px;background:#8a8a8a"></div>
<div style="position:absolute;left:1541px;top:821px;width:10px;height:1px;background:#8a8a8a"></div>
<div class="t" style="left:1587.3px;top:816px;font-size:12px;line-height:16px;font-weight:400;color:#115ea3;letter-spacing:-0.359px;">Evidence</div>
<div class="t" style="left:1667.5px;top:816px;font-size:12px;line-height:16px;font-weight:400;color:#242424;letter-spacing:-0.126px;">28 Mar 2026</div>
<div class="t" style="left:1771.4px;top:816px;font-size:12px;line-height:16px;font-weight:400;color:#242424;letter-spacing:-0.15px;">2026-03</div>
<svg class="i" style="left:1845.6px;top:813px;" width="20" height="20" viewBox="0 0 20 20" fill="none"><path d="M4.600 4.500v11a.9.900 0 0 0 1.350.780l10-5.500a.9.900 0 0 0 0-1.560l-10-5.500A.9.900 0 0 0 4.600 4.500z" stroke="#424242" stroke-width="1.15" stroke-linejoin="round"/></svg>
<svg class="i" style="left:1873px;top:813px;" width="20" height="20" viewBox="0 0 20 20" fill="none"><path d="M10.600 2.500H6A1.500 1.500 0 0 0 4.500 4v12A1.500 1.500 0 0 0 6 17.500h8a1.500 1.500 0 0 0 1.500-1.500V7z" stroke="#333" stroke-width="1.1" stroke-linejoin="round"/><path d="M10.600 2.500V6a1 1 0 0 0 1 1H15.500" stroke="#333" stroke-width="1.1" stroke-linejoin="round"/><rect x="6.500" y="9.500" width="7" height="6" rx="1.100" stroke="#333" stroke-width="1.0"/><path d="M6.500 12.500h7M8.500 9.500v6" stroke="#333" stroke-width="1.0"/></svg>
<div style="position:absolute;left:74px;top:884px;width:1829px;height:1px;background:#e0e0e0"></div>
<svg class="i" style="left:88px;top:858px;" width="10" height="12" viewBox="0 0 10 12" fill="none"><path d="M2.800 2.500L6 5.650 2.800 8.800" stroke="#707070" stroke-width="1" stroke-linecap="round" stroke-linejoin="round"/></svg>
<div class="t" style="left:118.3px;top:857px;font-size:12px;line-height:16px;font-weight:400;color:#242424;letter-spacing:-0.434px;-webkit-text-stroke:0.3px #242424;">A.5.12</div>
<div class="t" style="left:214.3px;top:857px;font-size:12px;line-height:16px;font-weight:400;color:#242424;letter-spacing:-0.434px;">A.5.12</div>
<div class="pill" style="left:1331px;top:857.2px;width:55px;background:#107c10"></div>
<div class="t" style="left:1335.5px;top:859.5px;font-size:9.4px;line-height:14px;font-weight:700;color:#fff;letter-spacing:0.073px;">Compliant</div>
<div class="t" style="right:445px;top:857px;font-size:12px;line-height:16px;font-weight:400;color:#242424;letter-spacing:-0.537px;">100%</div>
<svg class="i" style="left:1492px;top:855.5px;" width="12" height="12" viewBox="0 0 12 12" fill="none"><path d="M1.300 6.700l3.200 3.200L10.800 2.700" stroke="#2a7a2a" stroke-width=".950" stroke-linecap="round" stroke-linejoin="round"/></svg>
<svg class="i" style="left:1540px;top:855px;" width="12" height="13" viewBox="0 0 12 13" fill="none"><path d="M5.350 1.450a.75.750 0 0 1 1.300 0l4.600 8.300a.75.750 0 0 1-.650 1.100H1.400a.75.750 0 0 1-.650-1.100z" stroke="#b6b16a" stroke-width="1" stroke-linejoin="round"/><path d="M6 4.600v3" stroke="#c4c08a" stroke-width="1" stroke-linecap="round"/><circle cx="6" cy="9.100" r=".55" fill="#c4c08a"/></svg>
<div class="t" style="left:1587.3px;top:857px;font-size:12px;line-height:16px;font-weight:400;color:#115ea3;letter-spacing:-0.359px;">Evidence</div>
<div class="t" style="left:1667.5px;top:857px;font-size:12px;line-height:16px;font-weight:400;color:#242424;letter-spacing:-0.126px;">28 Mar 2026</div>
<div class="t" style="left:1771.4px;top:857px;font-size:12px;line-height:16px;font-weight:400;color:#242424;letter-spacing:-0.15px;">2026-03</div>
<svg class="i" style="left:1845.6px;top:854px;" width="20" height="20" viewBox="0 0 20 20" fill="none"><path d="M4.600 4.500v11a.9.900 0 0 0 1.350.780l10-5.500a.9.900 0 0 0 0-1.560l-10-5.500A.9.900 0 0 0 4.600 4.500z" stroke="#424242" stroke-width="1.15" stroke-linejoin="round"/></svg>
<svg class="i" style="left:1873px;top:854px;" width="20" height="20" viewBox="0 0 20 20" fill="none"><path d="M10.600 2.500H6A1.500 1.500 0 0 0 4.500 4v12A1.500 1.500 0 0 0 6 17.500h8a1.500 1.500 0 0 0 1.500-1.500V7z" stroke="#333" stroke-width="1.1" stroke-linejoin="round"/><path d="M10.600 2.500V6a1 1 0 0 0 1 1H15.500" stroke="#333" stroke-width="1.1" stroke-linejoin="round"/><rect x="6.500" y="9.500" width="7" height="6" rx="1.100" stroke="#333" stroke-width="1.0"/><path d="M6.500 12.500h7M8.500 9.500v6" stroke="#333" stroke-width="1.0"/></svg>
<div style="position:absolute;left:74px;top:925px;width:1829px;height:1px;background:#e0e0e0"></div>
<svg class="i" style="left:88px;top:899px;" width="10" height="12" viewBox="0 0 10 12" fill="none"><path d="M2.800 2.500L6 5.650 2.800 8.800" stroke="#707070" stroke-width="1" stroke-linecap="round" stroke-linejoin="round"/></svg>
<div class="t" style="left:118.3px;top:898px;font-size:12px;line-height:16px;font-weight:400;color:#242424;letter-spacing:-0.434px;-webkit-text-stroke:0.3px #242424;">A.5.13</div>
<div class="t" style="left:214.3px;top:898px;font-size:12px;line-height:16px;font-weight:400;color:#242424;letter-spacing:-0.434px;">A.5.13</div>
<div class="pill" style="left:1331px;top:898.2px;width:55px;background:#107c10"></div>
<div class="t" style="left:1335.5px;top:900.5px;font-size:9.4px;line-height:14px;font-weight:700;color:#fff;letter-spacing:0.073px;">Compliant</div>
<div class="t" style="right:445px;top:898px;font-size:12px;line-height:16px;font-weight:400;color:#242424;letter-spacing:-0.537px;">100%</div>
<svg class="i" style="left:1492px;top:896.5px;" width="12" height="12" viewBox="0 0 12 12" fill="none"><path d="M1.300 6.700l3.200 3.200L10.800 2.700" stroke="#2a7a2a" stroke-width=".950" stroke-linecap="round" stroke-linejoin="round"/></svg>
<div style="position:absolute;left:1541px;top:903px;width:10px;height:1px;background:#8a8a8a"></div>
<div class="t" style="left:1587.3px;top:898px;font-size:12px;line-height:16px;font-weight:400;color:#115ea3;letter-spacing:-0.359px;">Evidence</div>
<div class="t" style="left:1667.5px;top:898px;font-size:12px;line-height:16px;font-weight:400;color:#242424;letter-spacing:-0.126px;">28 Mar 2026</div>
<div class="t" style="left:1771.4px;top:898px;font-size:12px;line-height:16px;font-weight:400;color:#242424;letter-spacing:-0.15px;">2026-03</div>
<svg class="i" style="left:1845.6px;top:895px;" width="20" height="20" viewBox="0 0 20 20" fill="none"><path d="M4.600 4.500v11a.9.900 0 0 0 1.350.780l10-5.500a.9.900 0 0 0 0-1.560l-10-5.500A.9.900 0 0 0 4.600 4.500z" stroke="#424242" stroke-width="1.15" stroke-linejoin="round"/></svg>
<svg class="i" style="left:1873px;top:895px;" width="20" height="20" viewBox="0 0 20 20" fill="none"><path d="M10.600 2.500H6A1.500 1.500 0 0 0 4.500 4v12A1.500 1.500 0 0 0 6 17.500h8a1.500 1.500 0 0 0 1.500-1.500V7z" stroke="#333" stroke-width="1.1" stroke-linejoin="round"/><path d="M10.600 2.500V6a1 1 0 0 0 1 1H15.500" stroke="#333" stroke-width="1.1" stroke-linejoin="round"/><rect x="6.500" y="9.500" width="7" height="6" rx="1.100" stroke="#333" stroke-width="1.0"/><path d="M6.500 12.500h7M8.500 9.500v6" stroke="#333" stroke-width="1.0"/></svg>
<div style="position:absolute;left:74px;top:966px;width:1829px;height:1px;background:#e0e0e0"></div>
<svg class="i" style="left:88px;top:940px;" width="10" height="12" viewBox="0 0 10 12" fill="none"><path d="M2.800 2.500L6 5.650 2.800 8.800" stroke="#707070" stroke-width="1" stroke-linecap="round" stroke-linejoin="round"/></svg>
<div class="t" style="left:118.3px;top:939px;font-size:12px;line-height:16px;font-weight:400;color:#242424;letter-spacing:-0.434px;-webkit-text-stroke:0.3px #242424;">A.5.14</div>
<div class="t" style="left:214.3px;top:939px;font-size:12px;line-height:16px;font-weight:400;color:#242424;letter-spacing:-0.434px;">A.5.14</div>
<div class="pill" style="left:1331px;top:939.2px;width:55px;background:#107c10"></div>
<div class="t" style="left:1335.5px;top:941.5px;font-size:9.4px;line-height:14px;font-weight:700;color:#fff;letter-spacing:0.073px;">Compliant</div>
<div class="t" style="right:445px;top:939px;font-size:12px;line-height:16px;font-weight:400;color:#242424;letter-spacing:-0.537px;">100%</div>
<svg class="i" style="left:1492px;top:937.5px;" width="12" height="12" viewBox="0 0 12 12" fill="none"><path d="M1.300 6.700l3.200 3.200L10.800 2.700" stroke="#2a7a2a" stroke-width=".950" stroke-linecap="round" stroke-linejoin="round"/></svg>
<svg class="i" style="left:1540px;top:937px;" width="12" height="13" viewBox="0 0 12 13" fill="none"><path d="M5.350 1.450a.75.750 0 0 1 1.300 0l4.600 8.300a.75.750 0 0 1-.650 1.100H1.400a.75.750 0 0 1-.650-1.100z" stroke="#b6b16a" stroke-width="1" stroke-linejoin="round"/><path d="M6 4.600v3" stroke="#c4c08a" stroke-width="1" stroke-linecap="round"/><circle cx="6" cy="9.100" r=".55" fill="#c4c08a"/></svg>
<div class="t" style="left:1587.3px;top:939px;font-size:12px;line-height:16px;font-weight:400;color:#115ea3;letter-spacing:-0.359px;">Evidence</div>
<div class="t" style="left:1667.5px;top:939px;font-size:12px;line-height:16px;font-weight:400;color:#242424;letter-spacing:-0.126px;">28 Mar 2026</div>
<div class="t" style="left:1771.4px;top:939px;font-size:12px;line-height:16px;font-weight:400;color:#242424;letter-spacing:-0.15px;">2026-03</div>
<svg class="i" style="left:1845.6px;top:936px;" width="20" height="20" viewBox="0 0 20 20" fill="none"><path d="M4.600 4.500v11a.9.900 0 0 0 1.350.780l10-5.500a.9.900 0 0 0 0-1.560l-10-5.500A.9.900 0 0 0 4.600 4.500z" stroke="#424242" stroke-width="1.15" stroke-linejoin="round"/></svg>
<svg class="i" style="left:1873px;top:936px;" width="20" height="20" viewBox="0 0 20 20" fill="none"><path d="M10.600 2.500H6A1.500 1.500 0 0 0 4.500 4v12A1.500 1.500 0 0 0 6 17.500h8a1.500 1.500 0 0 0 1.500-1.500V7z" stroke="#333" stroke-width="1.1" stroke-linejoin="round"/><path d="M10.600 2.500V6a1 1 0 0 0 1 1H15.500" stroke="#333" stroke-width="1.1" stroke-linejoin="round"/><rect x="6.500" y="9.500" width="7" height="6" rx="1.100" stroke="#333" stroke-width="1.0"/><path d="M6.500 12.500h7M8.500 9.500v6" stroke="#333" stroke-width="1.0"/></svg>
<div style="position:absolute;left:74px;top:1007px;width:1829px;height:1px;background:#e0e0e0"></div>
<svg class="i" style="left:88px;top:981px;" width="10" height="12" viewBox="0 0 10 12" fill="none"><path d="M2.800 2.500L6 5.650 2.800 8.800" stroke="#707070" stroke-width="1" stroke-linecap="round" stroke-linejoin="round"/></svg>
<div class="t" style="left:118.3px;top:980px;font-size:12px;line-height:16px;font-weight:400;color:#242424;letter-spacing:-0.434px;-webkit-text-stroke:0.3px #242424;">A.5.15</div>
<div class="t" style="left:214.3px;top:980px;font-size:12px;line-height:16px;font-weight:400;color:#242424;letter-spacing:-0.434px;">A.5.15</div>
<div class="pill" style="left:1331px;top:980.2px;width:55px;background:#107c10"></div>
<div class="t" style="left:1335.5px;top:982.5px;font-size:9.4px;line-height:14px;font-weight:700;color:#fff;letter-spacing:0.073px;">Compliant</div>
<div class="t" style="right:445px;top:980px;font-size:12px;line-height:16px;font-weight:400;color:#242424;letter-spacing:-0.561px;">89%</div>
<svg class="i" style="left:1492px;top:978.5px;" width="12" height="12" viewBox="0 0 12 12" fill="none"><path d="M1.300 6.700l3.200 3.200L10.800 2.700" stroke="#2a7a2a" stroke-width=".950" stroke-linecap="round" stroke-linejoin="round"/></svg>
<svg class="i" style="left:1540px;top:978px;" width="12" height="13" viewBox="0 0 12 13" fill="none"><path d="M5.350 1.450a.75.750 0 0 1 1.300 0l4.600 8.300a.75.750 0 0 1-.650 1.100H1.400a.75.750 0 0 1-.650-1.100z" stroke="#b6b16a" stroke-width="1" stroke-linejoin="round"/><path d="M6 4.600v3" stroke="#c4c08a" stroke-width="1" stroke-linecap="round"/><circle cx="6" cy="9.100" r=".55" fill="#c4c08a"/></svg>
<div class="t" style="left:1587.3px;top:980px;font-size:12px;line-height:16px;font-weight:400;color:#115ea3;letter-spacing:-0.359px;">Evidence</div>
<div class="t" style="left:1667.5px;top:980px;font-size:12px;line-height:16px;font-weight:400;color:#242424;letter-spacing:-0.126px;">28 Mar 2026</div>
<div class="t" style="left:1771.4px;top:980px;font-size:12px;line-height:16px;font-weight:400;color:#242424;letter-spacing:-0.15px;">2026-03</div>
<svg class="i" style="left:1845.6px;top:977px;" width="20" height="20" viewBox="0 0 20 20" fill="none"><path d="M4.600 4.500v11a.9.900 0 0 0 1.350.780l10-5.500a.9.900 0 0 0 0-1.560l-10-5.500A.9.900 0 0 0 4.600 4.500z" stroke="#424242" stroke-width="1.15" stroke-linejoin="round"/></svg>
<svg class="i" style="left:1873px;top:977px;" width="20" height="20" viewBox="0 0 20 20" fill="none"><path d="M10.600 2.500H6A1.500 1.500 0 0 0 4.500 4v12A1.500 1.500 0 0 0 6 17.500h8a1.500 1.500 0 0 0 1.500-1.500V7z" stroke="#333" stroke-width="1.1" stroke-linejoin="round"/><path d="M10.600 2.500V6a1 1 0 0 0 1 1H15.500" stroke="#333" stroke-width="1.1" stroke-linejoin="round"/><rect x="6.500" y="9.500" width="7" height="6" rx="1.100" stroke="#333" stroke-width="1.0"/><path d="M6.500 12.500h7M8.500 9.500v6" stroke="#333" stroke-width="1.0"/></svg>
<div style="position:absolute;left:74px;top:1048px;width:1829px;height:1px;background:#e0e0e0"></div>
<svg class="i" style="left:88px;top:1022px;" width="10" height="12" viewBox="0 0 10 12" fill="none"><path d="M2.800 2.500L6 5.650 2.800 8.800" stroke="#707070" stroke-width="1" stroke-linecap="round" stroke-linejoin="round"/></svg>
<div class="t" style="left:118.3px;top:1021px;font-size:12px;line-height:16px;font-weight:400;color:#242424;letter-spacing:-0.434px;-webkit-text-stroke:0.3px #242424;">A.5.16</div>
<div class="t" style="left:214.3px;top:1021px;font-size:12px;line-height:16px;font-weight:400;color:#242424;letter-spacing:-0.434px;">A.5.16</div>
<div class="pill" style="left:1331px;top:1021.2px;width:55px;background:#107c10"></div>
<div class="t" style="left:1335.5px;top:1023.5px;font-size:9.4px;line-height:14px;font-weight:700;color:#fff;letter-spacing:0.073px;">Compliant</div>
<div class="t" style="right:445px;top:1021px;font-size:12px;line-height:16px;font-weight:400;color:#242424;letter-spacing:-0.537px;">100%</div>
<svg class="i" style="left:1492px;top:1020px;" width="12" height="12" viewBox="0 0 12 12" fill="none"><circle cx="6" cy="6" r="5.300" stroke="#8a8a8a" stroke-width="1"/><path d="M6 3.300v3.300" stroke="#8a8a8a" stroke-width="1" stroke-linecap="round"/><circle cx="6" cy="8.500" r=".6" fill="#8a8a8a"/></svg>
<svg class="i" style="left:1540px;top:1019px;" width="12" height="13" viewBox="0 0 12 13" fill="none"><path d="M5.350 1.450a.75.750 0 0 1 1.300 0l4.600 8.300a.75.750 0 0 1-.650 1.100H1.400a.75.750 0 0 1-.650-1.100z" stroke="#b6b16a" stroke-width="1" stroke-linejoin="round"/><path d="M6 4.600v3" stroke="#c4c08a" stroke-width="1" stroke-linecap="round"/><circle cx="6" cy="9.100" r=".55" fill="#c4c08a"/></svg>
<div class="t" style="left:1587.3px;top:1021px;font-size:12px;line-height:16px;font-weight:400;color:#115ea3;letter-spacing:-0.359px;">Evidence</div>
<div class="t" style="left:1667.5px;top:1021px;font-size:12px;line-height:16px;font-weight:400;color:#242424;letter-spacing:-0.126px;">28 Mar 2026</div>
<div class="t" style="left:1771.4px;top:1021px;font-size:12px;line-height:16px;font-weight:400;color:#242424;letter-spacing:-0.15px;">2026-03</div>
<svg class="i" style="left:1845.6px;top:1018px;" width="20" height="20" viewBox="0 0 20 20" fill="none"><path d="M4.600 4.500v11a.9.900 0 0 0 1.350.780l10-5.500a.9.900 0 0 0 0-1.560l-10-5.500A.9.900 0 0 0 4.600 4.500z" stroke="#424242" stroke-width="1.15" stroke-linejoin="round"/></svg>
<svg class="i" style="left:1873px;top:1018px;" width="20" height="20" viewBox="0 0 20 20" fill="none"><path d="M10.600 2.500H6A1.500 1.500 0 0 0 4.500 4v12A1.500 1.500 0 0 0 6 17.500h8a1.500 1.500 0 0 0 1.500-1.500V7z" stroke="#333" stroke-width="1.1" stroke-linejoin="round"/><path d="M10.600 2.500V6a1 1 0 0 0 1 1H15.500" stroke="#333" stroke-width="1.1" stroke-linejoin="round"/><rect x="6.500" y="9.500" width="7" height="6" rx="1.100" stroke="#333" stroke-width="1.0"/><path d="M6.500 12.500h7M8.500 9.500v6" stroke="#333" stroke-width="1.0"/></svg>
<div style="position:absolute;left:74px;top:1089px;width:1829px;height:1px;background:#e0e0e0"></div>
<svg class="i" style="left:88px;top:1063px;" width="10" height="12" viewBox="0 0 10 12" fill="none"><path d="M2.800 2.500L6 5.650 2.800 8.800" stroke="#707070" stroke-width="1" stroke-linecap="round" stroke-linejoin="round"/></svg>
<div class="t" style="left:118.3px;top:1062px;font-size:12px;line-height:16px;font-weight:400;color:#242424;letter-spacing:-0.434px;-webkit-text-stroke:0.3px #242424;">A.5.17</div>
<div class="t" style="left:214.3px;top:1062px;font-size:12px;line-height:16px;font-weight:400;color:#242424;letter-spacing:-0.434px;">A.5.17</div>
<div class="pill" style="left:1331px;top:1062.2px;width:55px;background:#107c10"></div>
<div class="t" style="left:1335.5px;top:1064.5px;font-size:9.4px;line-height:14px;font-weight:700;color:#fff;letter-spacing:0.073px;">Compliant</div>
<div class="t" style="right:445px;top:1062px;font-size:12px;line-height:16px;font-weight:400;color:#242424;letter-spacing:-0.537px;">100%</div>
<svg class="i" style="left:1492px;top:1060.5px;" width="12" height="12" viewBox="0 0 12 12" fill="none"><path d="M1.300 6.700l3.200 3.200L10.800 2.700" stroke="#2a7a2a" stroke-width=".950" stroke-linecap="round" stroke-linejoin="round"/></svg>
<svg class="i" style="left:1540px;top:1060px;" width="12" height="13" viewBox="0 0 12 13" fill="none"><path d="M5.350 1.450a.75.750 0 0 1 1.300 0l4.600 8.300a.75.750 0 0 1-.650 1.100H1.400a.75.750 0 0 1-.650-1.100z" stroke="#b6b16a" stroke-width="1" stroke-linejoin="round"/><path d="M6 4.600v3" stroke="#c4c08a" stroke-width="1" stroke-linecap="round"/><circle cx="6" cy="9.100" r=".55" fill="#c4c08a"/></svg>
<div class="t" style="left:1587.3px;top:1062px;font-size:12px;line-height:16px;font-weight:400;color:#115ea3;letter-spacing:-0.359px;">Evidence</div>
<div class="t" style="left:1667.5px;top:1062px;font-size:12px;line-height:16px;font-weight:400;color:#242424;letter-spacing:-0.126px;">28 Mar 2026</div>
<div class="t" style="left:1771.4px;top:1062px;font-size:12px;line-height:16px;font-weight:400;color:#242424;letter-spacing:-0.15px;">2026-03</div>
<svg class="i" style="left:1845.6px;top:1059px;" width="20" height="20" viewBox="0 0 20 20" fill="none"><path d="M4.600 4.500v11a.9.900 0 0 0 1.350.780l10-5.500a.9.900 0 0 0 0-1.560l-10-5.500A.9.900 0 0 0 4.600 4.500z" stroke="#424242" stroke-width="1.15" stroke-linejoin="round"/></svg>
<svg class="i" style="left:1873px;top:1059px;" width="20" height="20" viewBox="0 0 20 20" fill="none"><path d="M10.600 2.500H6A1.500 1.500 0 0 0 4.500 4v12A1.500 1.500 0 0 0 6 17.500h8a1.500 1.500 0 0 0 1.500-1.500V7z" stroke="#333" stroke-width="1.1" stroke-linejoin="round"/><path d="M10.600 2.500V6a1 1 0 0 0 1 1H15.500" stroke="#333" stroke-width="1.1" stroke-linejoin="round"/><rect x="6.500" y="9.500" width="7" height="6" rx="1.100" stroke="#333" stroke-width="1.0"/><path d="M6.500 12.500h7M8.500 9.500v6" stroke="#333" stroke-width="1.0"/></svg>
<div id="tip"></div>
<div class="t" style="left:12.2px;top:375px;font-size:12px;line-height:16px;font-weight:400;color:#242424;letter-spacing:-0.214px;z-index:6;">Expand sidebar</div>
</body></html>
